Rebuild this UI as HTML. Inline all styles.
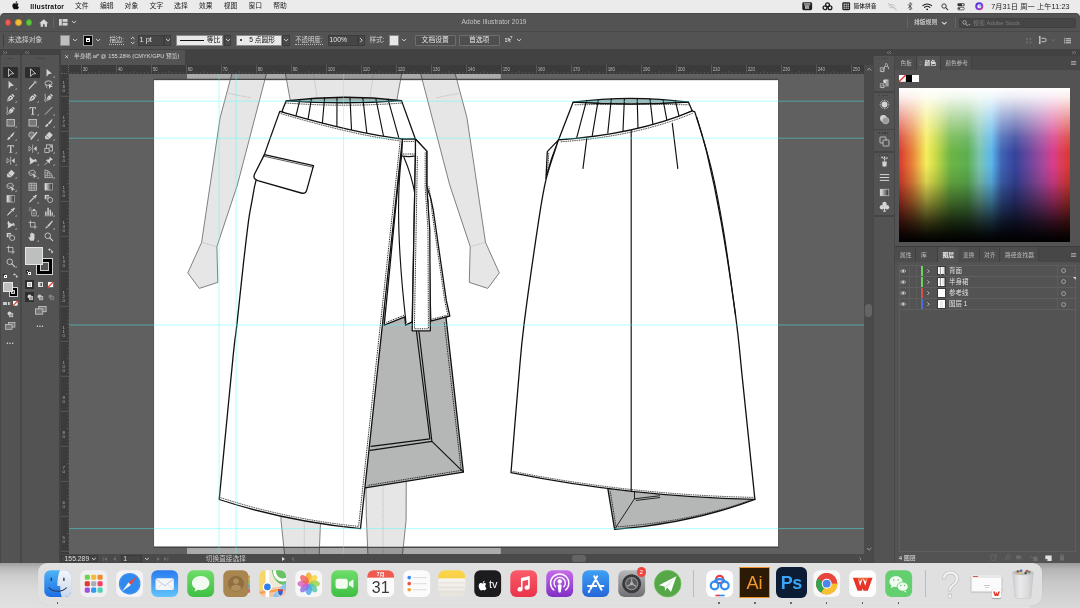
<!DOCTYPE html>
<html lang="zh-CN">
<head>
<meta charset="utf-8">
<title>Adobe Illustrator 2019</title>
<style>
*{box-sizing:border-box;margin:0;padding:0}
html,body{width:1080px;height:608px;overflow:hidden;background:#d9d9da;font-family:"Liberation Sans","Noto Sans CJK SC",sans-serif}
#root{will-change:transform;position:relative;width:1080px;height:608px;overflow:hidden;background:#d9d9da}
.abs{position:absolute}
.t{position:absolute;white-space:nowrap;line-height:1}
svg{position:absolute;overflow:visible}

</style>
</head>
<body>
<div id="root">
<div class="abs" style="left:0px;top:0px;width:1080px;height:12.8px;background:#ebebeb;"></div>
<svg style="left:11.6px;top:1.400px" width="7" height="8.4" viewBox="0 0 14 17"><path fill="#111" d="M11.6 9c0-2 1.6-2.9 1.7-3-0.9-1.400-2.400-1.600-2.900-1.600-1.200-0.100-2.400 0.700-3 0.700-0.600 0-1.600-0.700-2.600-0.700C3.400 4.400 2.100 5.200 1.400 6.400c-1.500 2.600-0.400 6.400 1 8.500 0.700 1 1.500 2.200 2.600 2.100 1-0 1.400-0.700 2.700-0.700 1.200 0 1.600 0.700 2.700 0.700 1.100-0 1.800-1 2.500-2.100 0.800-1.200 1.100-2.300 1.100-2.400-0-0-2.300-0.900-2.400-3.500zM9.700 3c0.600-0.700 0.900-1.600 0.800-2.600-0.800 0-1.800 0.500-2.400 1.200-0.500 0.600-1 1.600-0.800 2.500 0.900 0.100 1.800-0.400 2.400-1.100z"/></svg>
<div class="t" style="left:30.2px;top:3.9px;font-size:6.9px;color:#111;font-weight:bold;letter-spacing:0.2px">Illustrator</div>
<div class="t" style="left:75px;top:3.3px;font-size:6.8px;color:#1c1c1c;">文件</div>
<div class="t" style="left:99.9px;top:3.3px;font-size:6.8px;color:#1c1c1c;">编辑</div>
<div class="t" style="left:124.6px;top:3.3px;font-size:6.8px;color:#1c1c1c;">对象</div>
<div class="t" style="left:149.4px;top:3.3px;font-size:6.8px;color:#1c1c1c;">文字</div>
<div class="t" style="left:174.1px;top:3.3px;font-size:6.8px;color:#1c1c1c;">选择</div>
<div class="t" style="left:198.9px;top:3.3px;font-size:6.8px;color:#1c1c1c;">效果</div>
<div class="t" style="left:223.7px;top:3.3px;font-size:6.8px;color:#1c1c1c;">视图</div>
<div class="t" style="left:248.5px;top:3.3px;font-size:6.8px;color:#1c1c1c;">窗口</div>
<div class="t" style="left:273.3px;top:3.3px;font-size:6.8px;color:#1c1c1c;">帮助</div>
<svg style="left:802px;top:2.2px" width="10.4" height="8.4" viewBox="0 0 21 17"><rect x="0.500" y="0.500" width="20" height="16" rx="3" fill="#222"/><rect x="4" y="3" width="13" height="2" fill="#ebebeb"/><text x="10.500" y="14" font-size="10" font-weight="bold" text-anchor="middle" fill="#ebebeb" font-family="Liberation Sans, sans-serif">W</text></svg>
<svg style="left:821.6px;top:2.2px" width="11" height="8.6" viewBox="0 0 22 17"><g fill="none" stroke="#1a1a1a" stroke-width="2.600"><circle cx="11" cy="5.500" r="3.800"/><circle cx="6" cy="11.500" r="3.800"/><circle cx="16" cy="11.500" r="3.800"/></g></svg>
<svg style="left:842.2px;top:2.2px" width="8.4" height="8.4" viewBox="0 0 16 16"><rect x="0.500" y="0.500" width="15" height="15" rx="2.500" fill="#222"/><g fill="#ebebeb"><rect x="3" y="3" width="2.400" height="2.400"/><rect x="6.800" y="3" width="2.400" height="2.400"/><rect x="10.600" y="3" width="2.400" height="2.400"/><rect x="3" y="6.800" width="2.400" height="2.400"/><rect x="6.800" y="6.800" width="2.400" height="2.400"/><rect x="10.600" y="6.800" width="2.400" height="2.400"/><rect x="3" y="10.600" width="2.400" height="2.400"/><rect x="6.800" y="10.600" width="2.400" height="2.400"/><rect x="10.600" y="10.600" width="2.400" height="2.400"/></g></svg>
<div class="t" style="left:853.6px;top:3.9px;font-size:5.7px;color:#1c1c1c;font-weight:500">简体拼音</div>
<svg style="left:886.5px;top:2.6px" width="11" height="7.6" viewBox="0 0 22 15"><g fill="none" stroke="#b4b4b4" stroke-width="1.600" stroke-linecap="round"><path d="M2 5c5-3 10-3 14 1"/><path d="M5 9c4-2 8-1 11 2"/><path d="M3 1l16 13"/></g></svg>
<svg style="left:906.6px;top:2.2px" width="6" height="8.600" viewBox="0 0 12 17"><path fill="none" stroke="#333" stroke-width="1.500" stroke-linejoin="round" d="M2 4.500l8 8-4 3.500V1l4 3.500-8 8"/></svg>
<svg style="left:922.4px;top:2.6px" width="10.400" height="7.800" viewBox="0 0 21 16"><g fill="none" stroke="#222" stroke-width="2.200" stroke-linecap="round"><path d="M1.500 5.500a13 13 0 0 1 18 0"/><path d="M5 9.200a8 8 0 0 1 11 0"/></g><circle cx="10.500" cy="13" r="1.900" fill="#222"/></svg>
<svg style="left:941.4px;top:2.6px" width="7.600" height="7.600" viewBox="0 0 15 15"><circle cx="6" cy="6" r="4.300" fill="none" stroke="#333" stroke-width="1.800"/><path d="M9.300 9.300l4.200 4.200" stroke="#333" stroke-width="2" stroke-linecap="round"/></svg>
<svg style="left:957.2px;top:2.8px" width="8" height="7.400" viewBox="0 0 16 15"><rect x="0.500" y="0.500" width="15" height="6" rx="3" fill="#333"/><circle cx="11.600" cy="3.500" r="1.800" fill="#ebebeb"/><rect x="1.200" y="8.700" width="13.600" height="5.300" rx="2.650" fill="none" stroke="#333" stroke-width="1.400"/><circle cx="4.300" cy="11.350" r="1.900" fill="#333"/></svg>
<svg style="left:974.6px;top:2.200px" width="8.600" height="8.600" viewBox="0 0 16 16"><defs><linearGradient id="siri" x1="0" y1="0" x2="1" y2="1"><stop offset="0" stop-color="#3b2bd6"/><stop offset="0.500" stop-color="#7b3fe4"/><stop offset="1" stop-color="#e8456e"/></linearGradient></defs><circle cx="8" cy="8" r="7.500" fill="url(#siri)"/><circle cx="8" cy="8" r="3.600" fill="#f4f0ff"/><circle cx="9.500" cy="7" r="2" fill="#58c6f2" opacity="0.800"/></svg>
<div class="t" style="left:991.2px;top:3.3px;font-size:7.2px;color:#1a1a1a;letter-spacing:0.12px">7月31日 周一 上午11:23</div>
<div class="abs" style="left:0px;top:12.8px;width:1080px;height:550px;background:#535353;border-radius:5px 5px 0 0"></div>
<div class="abs" style="left:0px;top:12.8px;width:1080px;height:19.4px;background:#535353;border-radius:5px 5px 0 0;border-bottom:1px solid #494949;border-top:1.200px solid #494949"></div>
<div class="abs" style="left:4.6000000000000005px;top:19.3px;width:6.600px;height:6.600px;border-radius:50%;background:#ee5e57;border:0.500px solid #c9433d"></div>
<div class="abs" style="left:15.099999999999998px;top:19.3px;width:6.600px;height:6.600px;border-radius:50%;background:#f5bd30;border:0.500px solid #cf9a22"></div>
<div class="abs" style="left:25.7px;top:19.3px;width:6.600px;height:6.600px;border-radius:50%;background:#5fc93f;border:0.500px solid #47a32c"></div>
<svg style="left:38.8px;top:18.6px" width="9.600" height="8" viewBox="0 0 19 16"><path fill="#d8d8d8" d="M9.500 0.500L0.500 8.500h2.700v7h4.600v-4.800h3.400v4.800h4.600v-7h2.700z"/></svg>
<div class="abs" style="left:53.2px;top:17px;width:0.7px;height:11px;background:#646464;"></div>
<svg style="left:58.6px;top:19px" width="8.600" height="6.600" viewBox="0 0 17 13"><g fill="#d2d2d2"><rect x="0" y="0" width="5.500" height="13"/><rect x="7" y="0" width="10" height="5.600"/><rect x="7" y="7.400" width="10" height="5.600"/></g></svg>
<svg style="left:72.10000000000001px;top:21.299999999999997px" width="4.2" height="2.2" viewBox="0 0 4.2 2.2"><path d="M0.300 0.300L2.1 1.9000000000000001L3.9000000000000004 0.300" fill="none" stroke="#d0d0d0" stroke-width="1" stroke-linecap="round" stroke-linejoin="round"/></svg>
<div class="t" style="left:461.6px;top:19.2px;font-size:6.6px;color:#c4c4c4;letter-spacing:0.020px">Adobe Illustrator 2019</div>
<div class="abs" style="left:906.8px;top:17px;width:0.7px;height:11px;background:#646464;"></div>
<div class="t" style="left:914px;top:20.2px;font-size:5.8px;color:#dadada;font-weight:500">排版规则</div>
<svg style="left:942.3000000000001px;top:22.400000000000002px" width="4.6" height="2.4" viewBox="0 0 4.6 2.4"><path d="M0.300 0.300L2.3 2.1L4.3 0.300" fill="none" stroke="#dcdcdc" stroke-width="1.1" stroke-linecap="round" stroke-linejoin="round"/></svg>
<div class="abs" style="left:954.6px;top:17px;width:0.7px;height:11px;background:#646464;"></div>
<div class="abs" style="left:958.8px;top:18.2px;width:117.6px;height:9.4px;background:#454545;border-radius:1.500px;border:0.500px solid #404040"></div>
<svg style="left:961.6px;top:20.200px" width="9" height="6.400" viewBox="0 0 18 13"><circle cx="5" cy="5" r="3.600" fill="none" stroke="#bdbdbd" stroke-width="1.500"/><path d="M7.600 7.800l3.600 4" stroke="#bdbdbd" stroke-width="1.700" stroke-linecap="round"/><path d="M12.500 8.500h4.500l-2.250 2.800z" fill="#bdbdbd"/></svg>
<div class="t" style="left:973.2px;top:20.6px;font-size:5.9px;color:#7d7d7d;">搜索 Adobe Stock</div>
<div class="abs" style="left:0px;top:32.2px;width:1080px;height:17px;background:#535353;"></div>
<div class="abs" style="left:3.4px;top:34px;width:0.8px;height:12.6px;background:#3e3e3e;"></div>
<div class="t" style="left:8px;top:36.65px;font-size:6.9px;color:#d2d2d2;">未选择对象</div>
<div class="abs" style="left:59.5px;top:35px;width:10.6px;height:10.6px;background:#bdbfbe;border:0.500px solid #8a8a8a"></div>
<svg style="left:72.7px;top:39.3px" width="4.2" height="2.2" viewBox="0 0 4.2 2.2"><path d="M0.300 0.300L2.1 1.9000000000000001L3.9000000000000004 0.300" fill="none" stroke="#c8c8c8" stroke-width="1" stroke-linecap="round" stroke-linejoin="round"/></svg>
<div class="abs" style="left:82.6px;top:35px;width:10.6px;height:10.6px;background:#000;border:0.600px solid #9a9a9a"></div>
<div class="abs" style="left:86px;top:38.4px;width:3.8px;height:3.8px;background:#fff;"></div>
<div class="abs" style="left:87.1px;top:39.5px;width:1.6px;height:1.6px;background:#000;"></div>
<svg style="left:96.10000000000001px;top:39.3px" width="4.2" height="2.2" viewBox="0 0 4.2 2.2"><path d="M0.300 0.300L2.1 1.9000000000000001L3.9000000000000004 0.300" fill="none" stroke="#c8c8c8" stroke-width="1" stroke-linecap="round" stroke-linejoin="round"/></svg>
<div class="t" style="left:109.4px;top:36.9px;font-size:6.4px;color:#d2d2d2;border-bottom:0.600px dotted #bbb;padding-bottom:0.300px">描边:</div>
<svg style="left:130.8px;top:41.8px" width="3.600" height="2" viewBox="0 0 3.600 2"><path d="M0.300 0.300L1.800 1.700L3.300 0.300" fill="none" stroke="#d0d0d0" stroke-width="1" stroke-linecap="round"/></svg>
<svg style="left:130.8px;top:37.2px" width="3.600" height="2" viewBox="0 0 3.600 2"><path d="M0.300 1.700L1.800 0.300L3.300 1.700" fill="none" stroke="#d0d0d0" stroke-width="1" stroke-linecap="round"/></svg>
<div class="abs" style="left:137.8px;top:35px;width:26px;height:10.6px;background:#464646;border:0.500px solid #3c3c3c"></div>
<div class="t" style="left:139.6px;top:36.4px;font-size:7.4px;color:#e4e4e4;">1 pt</div>
<div class="abs" style="left:163.8px;top:35px;width:7.6px;height:10.6px;background:#4a4a4a;border:0.500px solid #3c3c3c"></div>
<svg style="left:165.5px;top:39.3px" width="4.2" height="2.2" viewBox="0 0 4.2 2.2"><path d="M0.300 0.300L2.1 1.9000000000000001L3.9000000000000004 0.300" fill="none" stroke="#c8c8c8" stroke-width="1" stroke-linecap="round" stroke-linejoin="round"/></svg>
<div class="abs" style="left:176px;top:35px;width:47.4px;height:10.6px;background:#e9e9e9;border:0.500px solid #8a8a8a"></div>
<div class="abs" style="left:180px;top:39.9px;width:24px;height:1px;background:#111;"></div>
<div class="t" style="left:206.8px;top:36.7px;font-size:6.8px;color:#111;">等比</div>
<div class="abs" style="left:223.8px;top:35px;width:7.6px;height:10.6px;background:#4a4a4a;border:0.500px solid #3c3c3c"></div>
<svg style="left:225.70000000000002px;top:39.3px" width="4.2" height="2.2" viewBox="0 0 4.2 2.2"><path d="M0.300 0.300L2.1 1.9000000000000001L3.9000000000000004 0.300" fill="none" stroke="#c8c8c8" stroke-width="1" stroke-linecap="round" stroke-linejoin="round"/></svg>
<div class="abs" style="left:236px;top:35px;width:46px;height:10.6px;background:#e9e9e9;border:0.500px solid #8a8a8a"></div>
<div class="abs" style="left:240px;top:39.200px;width:2.200px;height:2.200px;border-radius:50%;background:#111"></div>
<div class="t" style="left:249.2px;top:36.75px;font-size:6.7px;color:#111;">5 点圆形</div>
<div class="abs" style="left:282.4px;top:35px;width:7.6px;height:10.6px;background:#4a4a4a;border:0.500px solid #3c3c3c"></div>
<svg style="left:284.29999999999995px;top:39.3px" width="4.2" height="2.2" viewBox="0 0 4.2 2.2"><path d="M0.300 0.300L2.1 1.9000000000000001L3.9000000000000004 0.300" fill="none" stroke="#c8c8c8" stroke-width="1" stroke-linecap="round" stroke-linejoin="round"/></svg>
<div class="t" style="left:295.2px;top:36.9px;font-size:6.4px;color:#d2d2d2;border-bottom:0.600px dotted #bbb;padding-bottom:0.300px">不透明度:</div>
<div class="abs" style="left:328.2px;top:35px;width:29.4px;height:10.6px;background:#464646;border:0.500px solid #3c3c3c"></div>
<div class="t" style="left:329.6px;top:36.7px;font-size:6.8px;color:#e4e4e4;">100%</div>
<div class="abs" style="left:357.8px;top:35px;width:7.2px;height:10.6px;background:#4a4a4a;border:0.500px solid #3c3c3c"></div>
<svg style="left:360.2px;top:38.2px" width="2.600" height="4.400" viewBox="0 0 2.600 4.400"><path d="M0.400 0.400L2.200 2.200L0.400 4" fill="none" stroke="#d0d0d0" stroke-width="1" stroke-linecap="round"/></svg>
<div class="t" style="left:369.4px;top:36.75px;font-size:6.7px;color:#d2d2d2;">样式:</div>
<div class="abs" style="left:388.6px;top:35px;width:10.6px;height:10.6px;background:#e6e6e6;border:0.500px solid #8a8a8a"></div>
<svg style="left:401.9px;top:39.3px" width="4.2" height="2.2" viewBox="0 0 4.2 2.2"><path d="M0.300 0.300L2.1 1.9000000000000001L3.9000000000000004 0.300" fill="none" stroke="#c8c8c8" stroke-width="1" stroke-linecap="round" stroke-linejoin="round"/></svg>
<div class="abs" style="left:414.8px;top:35px;width:41px;height:10.6px;background:#4e4e4e;border:0.700px solid #6e6e6e;border-radius:1px"></div>
<div class="t" style="left:421.6px;top:36.7px;font-size:6.8px;color:#e6e6e6;">文档设置</div>
<div class="abs" style="left:459.2px;top:35px;width:40.4px;height:10.6px;background:#4e4e4e;border:0.700px solid #6e6e6e;border-radius:1px"></div>
<div class="t" style="left:469px;top:36.7px;font-size:6.8px;color:#e6e6e6;">首选项</div>
<svg style="left:505.4px;top:36.4px" width="8" height="7.600" viewBox="0 0 16 15"><g fill="#d0d0d0"><rect x="0" y="4" width="5" height="1.600"/><rect x="0" y="7" width="5" height="1.600"/><rect x="0" y="10" width="5" height="1.600"/><path d="M6.500 3l6 5-3 0.600 1.800 3.600-1.400 0.600-1.700-3.600-1.700 1.800z"/><rect x="10" y="0" width="5" height="1.300"/><rect x="12" y="0" width="1.300" height="5"/></g></svg>
<svg style="left:517.3px;top:39.3px" width="4.2" height="2.2" viewBox="0 0 4.2 2.2"><path d="M0.300 0.300L2.1 1.9000000000000001L3.9000000000000004 0.300" fill="none" stroke="#c8c8c8" stroke-width="1" stroke-linecap="round" stroke-linejoin="round"/></svg>
<svg style="left:1026.4px;top:37.6px" width="5.600" height="5.600" viewBox="0 0 11 11"><g fill="#6c6c6c"><rect x="0" y="0" width="3.600" height="3.600"/><rect x="7" y="0" width="3.600" height="3.600"/><rect x="0" y="7" width="3.600" height="3.600"/><rect x="7" y="7" width="3.600" height="3.600"/></g></svg>
<svg style="left:1038.6px;top:36.2px" width="8.400" height="8" viewBox="0 0 17 16"><g fill="#d8d8d8"><rect x="0" y="0" width="3" height="16"/></g><g fill="#535353"><rect x="0" y="3.500" width="3" height="1"/><rect x="0" y="7.500" width="3" height="1"/><rect x="0" y="11.500" width="3" height="1"/></g><path d="M5 4.500h6a3.500 3.500 0 0 1 0 7h-6" fill="none" stroke="#d8d8d8" stroke-width="1.800"/></svg>
<svg style="left:1050.5px;top:39.3px" width="4.2" height="2.2" viewBox="0 0 4.2 2.2"><path d="M0.300 0.300L2.1 1.9000000000000001L3.9000000000000004 0.300" fill="none" stroke="#6a6a6a" stroke-width="1" stroke-linecap="round" stroke-linejoin="round"/></svg>
<svg style="left:1064px;top:37.600px" width="7" height="5.600" viewBox="0 0 14 11"><g fill="#d2d2d2"><rect x="0" y="0.500" width="2.400" height="2"/><rect x="3.600" y="0.500" width="10.400" height="2"/><rect x="0" y="4.500" width="2.400" height="2"/><rect x="3.600" y="4.500" width="10.400" height="2"/><rect x="0" y="8.500" width="2.400" height="2"/><rect x="3.600" y="8.500" width="10.400" height="2"/></g></svg>
<div class="abs" style="left:0px;top:49px;width:1080px;height:15.8px;background:#424242;"></div>
<div class="abs" style="left:60.8px;top:50px;width:124.6px;height:14.6px;background:#535353;border-radius:1px 1px 0 0"></div>
<svg style="left:64.6px;top:55.4px" width="3.400" height="3.400" viewBox="0 0 3.400 3.400"><path d="M0.300 0.300L3.100 3.100M3.100 0.300L0.300 3.100" stroke="#d8d8d8" stroke-width="0.800"/></svg>
<div class="t" style="left:74px;top:54.1px;font-size:5.7px;color:#dcdcdc;">半身裙.ai* @ 155.28% (CMYK/GPU 预览)</div>
<div class="abs" style="left:0px;top:49px;width:61px;height:513.8px;background:#484848;"></div>
<div class="abs" style="left:0px;top:49px;width:61px;height:6.6px;background:#424242;"></div>
<div class="abs" style="left:59.2px;top:49px;width:1.8px;height:513.8px;background:#424242;"></div>
<div class="abs" style="left:0.8px;top:55.4px;width:19.4px;height:507.4px;background:#535353;"></div>
<div class="abs" style="left:21.8px;top:55.4px;width:37.4px;height:507.4px;background:#535353;"></div>
<svg style="left:2.8px;top:51px" width="4.200" height="3.200" viewBox="0 0 4.200 3.200"><path d="M0.300 0.300L1.700 1.600L0.300 2.900M2.500 0.300L3.900 1.600L2.500 2.900" fill="none" stroke="#9a9a9a" stroke-width="0.700"/></svg>
<svg style="left:25.2px;top:51px" width="4.200" height="3.200" viewBox="0 0 4.200 3.200"><path d="M1.700 0.300L0.300 1.600L1.700 2.900M3.900 0.300L2.500 1.600L3.900 2.900" fill="none" stroke="#9a9a9a" stroke-width="0.700"/></svg>
<div class="abs" style="left:5.4px;top:57.8px;width:9.600px;height:1.400px;background:repeating-linear-gradient(90deg,#3e3e3e 0,#3e3e3e 0.800px,transparent 0.800px,transparent 1.600px)"></div>
<div class="abs" style="left:35.6px;top:57.8px;width:9.600px;height:1.400px;background:repeating-linear-gradient(90deg,#3e3e3e 0,#3e3e3e 0.800px,transparent 0.800px,transparent 1.600px)"></div>
<div class="abs" style="left:3.3px;top:67px;width:14.6px;height:10.8px;background:#2d2d2d;border-radius:1px"></div>
<svg style="left:5.90px;top:67.70px" width="9.4" height="9.4" viewBox="0 0 10 10"><path d="M2.700 0.900L8.300 6.100L5.100 6.300L2.700 9.100Z" fill="none" stroke="#d2d2d2" stroke-width="0.900" stroke-linejoin="round"/></svg>
<svg style="left:5.90px;top:80.36px" width="9.4" height="9.4" viewBox="0 0 10 10"><path d="M2.700 0.700L8.500 6.100L5.200 6.300L2.700 9.300Z" fill="#d2d2d2"/></svg>
<svg style="left:14.70px;top:88.36px" width="1.600" height="1.600" viewBox="0 0 2 2"><path d="M2 0V2H0Z" fill="#d2d2d2"/></svg>
<svg style="left:5.90px;top:93.02px" width="9.4" height="9.4" viewBox="0 0 10 10"><path d="M6.900 0.800L9.300 3.200L8.200 4.300L5.800 1.900Z" fill="#d2d2d2"/><path d="M5.400 2.400L7.700 4.700C7.500 6.600 5.700 7.900 1.200 9L1 8.800C2.100 4.300 3.400 2.600 5.400 2.400Z" fill="#d2d2d2"/><path d="M1.300 8.700L4.600 5.400" stroke="#535353" stroke-width="0.700"/><circle cx="4.900" cy="5.100" r="0.800" fill="#535353"/></svg>
<svg style="left:14.70px;top:101.02px" width="1.600" height="1.600" viewBox="0 0 2 2"><path d="M2 0V2H0Z" fill="#d2d2d2"/></svg>
<svg style="left:5.90px;top:105.68px" width="9.4" height="9.4" viewBox="0 0 10 10"><path d="M7.400 0.800L9.600 3L8.600 4L6.400 1.800Z" fill="#d2d2d2"/><path d="M6 2.300L8.100 4.400C7.900 6.200 6.300 7.400 2.600 8.400L2.400 8.200C3.300 4.400 4.300 2.500 6 2.300Z" fill="#d2d2d2"/><path d="M2.700 8.100L5.300 5.500" stroke="#535353" stroke-width="0.600"/><path d="M1.400 0.800C0.400 3.500 2.400 4.500 1.200 6.600C0.300 8 0.900 9.200 2.200 9.300" fill="none" stroke="#d2d2d2" stroke-width="0.800"/></svg>
<svg style="left:5.90px;top:118.34px" width="9.4" height="9.4" viewBox="0 0 10 10"><rect x="1" y="1.600" width="8" height="7" fill="#777" stroke="#d2d2d2" stroke-width="0.800"/></svg>
<svg style="left:14.70px;top:126.34px" width="1.600" height="1.600" viewBox="0 0 2 2"><path d="M2 0V2H0Z" fill="#d2d2d2"/></svg>
<svg style="left:5.90px;top:131.00px" width="9.4" height="9.4" viewBox="0 0 10 10"><path d="M9.300 0.700C7.200 2 5.300 4 4.200 5.600L5.300 6.700C6.900 5.600 8.400 3.400 9.300 0.700Z" fill="#d2d2d2"/><path d="M3.700 6L4.900 7.200C4.600 8.800 2.700 9.600 0.900 9.300C1.900 8.600 1.700 6.500 3.700 6Z" fill="#d2d2d2"/></svg>
<svg style="left:14.70px;top:139.00px" width="1.600" height="1.600" viewBox="0 0 2 2"><path d="M2 0V2H0Z" fill="#d2d2d2"/></svg>
<svg style="left:5.90px;top:143.66px" width="9.4" height="9.4" viewBox="0 0 10 10"><path d="M1.600 1.200h6.800v2.200h-0.700c-0.100-0.800-0.400-1.200-1.200-1.200h-0.800v5.700c0 0.600 0.300 0.700 1 0.800v0.700h-3.400v-0.700c0.700-0.100 1-0.200 1-0.800v-5.700h-0.800c-0.800 0-1.100 0.400-1.200 1.200h-0.700z" fill="#d2d2d2"/></svg>
<svg style="left:14.70px;top:151.66px" width="1.600" height="1.600" viewBox="0 0 2 2"><path d="M2 0V2H0Z" fill="#d2d2d2"/></svg>
<svg style="left:5.90px;top:156.32px" width="9.4" height="9.4" viewBox="0 0 10 10"><path d="M5 0.600v8.800" stroke="#d2d2d2" stroke-width="0.700"/><path d="M1 2.400L3.800 5L1 7.600Z" fill="none" stroke="#d2d2d2" stroke-width="0.700"/><path d="M9.200 2.200L6.100 5L9.200 7.800Z" fill="#d2d2d2"/></svg>
<svg style="left:14.70px;top:164.32px" width="1.600" height="1.600" viewBox="0 0 2 2"><path d="M2 0V2H0Z" fill="#d2d2d2"/></svg>
<svg style="left:5.90px;top:168.98px" width="9.4" height="9.4" viewBox="0 0 10 10"><path d="M5.700 0.800L9.400 4.200L5.500 8.800L1.600 8.800L0.900 5.900Z" fill="#d2d2d2"/><path d="M2 4.700L5.900 8.200" stroke="#535353" stroke-width="0.700"/></svg>
<svg style="left:14.70px;top:176.98px" width="1.600" height="1.600" viewBox="0 0 2 2"><path d="M2 0V2H0Z" fill="#d2d2d2"/></svg>
<svg style="left:5.90px;top:181.64px" width="9.4" height="9.4" viewBox="0 0 10 10"><path d="M1 4.200C0.800 2.200 2.600 1.400 4 1.800C5.200 0.800 7.200 1.400 7.400 3C8.400 3.800 7.800 5.400 6.800 5.600L3.200 6.800C1.800 6.800 0.800 5.800 1 4.200Z" fill="none" stroke="#d2d2d2" stroke-width="0.800"/><path d="M1.400 3.600L4.800 5.400L7.200 3.200M4.800 5.400V6.200" fill="none" stroke="#d2d2d2" stroke-width="0.500"/><path d="M5.400 5L9.600 8L7.400 8.200L6.200 10Z" fill="#d2d2d2"/></svg>
<svg style="left:14.70px;top:189.64px" width="1.600" height="1.600" viewBox="0 0 2 2"><path d="M2 0V2H0Z" fill="#d2d2d2"/></svg>
<svg style="left:5.90px;top:194.30px" width="9.4" height="9.4" viewBox="0 0 10 10"><defs><linearGradient id="gr11" x1="0" x2="1"><stop offset="0" stop-color="#e8e8e8"/><stop offset="1" stop-color="#2a2a2a"/></linearGradient></defs><rect x="1" y="1.400" width="8" height="7.200" fill="url(#gr11)" stroke="#d2d2d2" stroke-width="0.600"/></svg>
<svg style="left:5.90px;top:206.96px" width="9.4" height="9.4" viewBox="0 0 10 10"><path d="M8.200 0.800C9 0.600 9.600 1.200 9.300 2L7.800 3.600L8.400 4.200L7.600 5L5.200 2.600L6 1.800L6.600 2.400Z" fill="#d2d2d2"/><path d="M5.600 3.600L6.600 4.600L2.600 8.600L1 9.200L1.600 7.600Z" fill="#d2d2d2"/></svg>
<svg style="left:14.70px;top:214.96px" width="1.600" height="1.600" viewBox="0 0 2 2"><path d="M2 0V2H0Z" fill="#d2d2d2"/></svg>
<svg style="left:5.90px;top:219.62px" width="9.4" height="9.4" viewBox="0 0 10 10"><path d="M1 8.800C2.600 7.800 2.400 6 1.800 4.200C1.400 2.800 2 1.400 2.800 0.800C2.800 2.200 4 3 5.200 3.600C6.600 4.300 7.400 3.600 8.200 2.800C9 3.800 9.400 5.400 9.200 6.600C8.400 5.600 7.200 5.600 6.400 6.200C5.200 7.200 3.600 8.800 1 8.800Z" fill="#d2d2d2"/></svg>
<svg style="left:14.70px;top:227.62px" width="1.600" height="1.600" viewBox="0 0 2 2"><path d="M2 0V2H0Z" fill="#d2d2d2"/></svg>
<svg style="left:5.90px;top:232.28px" width="9.4" height="9.4" viewBox="0 0 10 10"><rect x="0.800" y="1" width="4.600" height="4.600" fill="#d2d2d2"/><rect x="2.800" y="2.800" width="3.800" height="3.800" fill="#8a8a8a" stroke="#535353" stroke-width="0.400"/><circle cx="6.600" cy="6.400" r="2.700" fill="#535353" stroke="#d2d2d2" stroke-width="0.800"/></svg>
<svg style="left:5.90px;top:244.94px" width="9.4" height="9.4" viewBox="0 0 10 10"><path d="M2.600 0.600V7.400H9.400M0.600 2.600H7.400V9.400" fill="none" stroke="#d2d2d2" stroke-width="0.800"/></svg>
<svg style="left:5.90px;top:257.60px" width="9.4" height="9.4" viewBox="0 0 10 10"><circle cx="4" cy="4" r="3" fill="none" stroke="#d2d2d2" stroke-width="0.900"/><path d="M6.200 6.200L9.200 9.200" stroke="#d2d2d2" stroke-width="1.200" stroke-linecap="round"/></svg>
<svg style="left:14.70px;top:265.60px" width="1.600" height="1.600" viewBox="0 0 2 2"><path d="M2 0V2H0Z" fill="#d2d2d2"/></svg>
<div class="abs" style="left:25.3px;top:67px;width:14.6px;height:10.8px;background:#2d2d2d;border-radius:1px"></div>
<svg style="left:27.90px;top:67.70px" width="9.4" height="9.4" viewBox="0 0 10 10"><path d="M2.700 0.900L8.300 6.100L5.100 6.300L2.700 9.100Z" fill="none" stroke="#d2d2d2" stroke-width="0.900" stroke-linejoin="round"/></svg>
<svg style="left:44.10px;top:67.70px" width="9.4" height="9.4" viewBox="0 0 10 10"><path d="M2.700 0.700L8.500 6.100L5.200 6.300L2.700 9.300Z" fill="#d2d2d2"/></svg>
<svg style="left:52.90px;top:75.70px" width="1.600" height="1.600" viewBox="0 0 2 2"><path d="M2 0V2H0Z" fill="#d2d2d2"/></svg>
<svg style="left:27.90px;top:80.36px" width="9.4" height="9.4" viewBox="0 0 10 10"><path d="M1.300 9.200L6.300 3.800" stroke="#d2d2d2" stroke-width="1.300" stroke-linecap="round"/><path d="M7.600 0.600v3.600M5.800 2.400h3.600M6.400 1.200l2.400 2.400M8.800 1.200l-2.400 2.400" stroke="#d2d2d2" stroke-width="0.500"/></svg>
<svg style="left:44.10px;top:80.36px" width="9.4" height="9.4" viewBox="0 0 10 10"><ellipse cx="4.800" cy="3.400" rx="3.800" ry="2.500" fill="none" stroke="#d2d2d2" stroke-width="0.900"/><path d="M2.600 5.200c-0.800 1.200 0 2.400 1 3.600" fill="none" stroke="#d2d2d2" stroke-width="0.800"/><path d="M5 3.800L9.400 7.400L7 7.400L5.600 9.600Z" fill="#d2d2d2"/></svg>
<svg style="left:27.90px;top:93.02px" width="9.4" height="9.4" viewBox="0 0 10 10"><path d="M6.900 0.800L9.300 3.200L8.200 4.300L5.800 1.900Z" fill="#d2d2d2"/><path d="M5.400 2.400L7.700 4.700C7.500 6.600 5.700 7.900 1.200 9L1 8.800C2.100 4.300 3.400 2.600 5.400 2.400Z" fill="#d2d2d2"/><path d="M1.300 8.700L4.600 5.400" stroke="#535353" stroke-width="0.700"/><circle cx="4.900" cy="5.100" r="0.800" fill="#535353"/></svg>
<svg style="left:36.70px;top:101.02px" width="1.600" height="1.600" viewBox="0 0 2 2"><path d="M2 0V2H0Z" fill="#d2d2d2"/></svg>
<svg style="left:44.10px;top:93.02px" width="9.4" height="9.4" viewBox="0 0 10 10"><path d="M7.400 0.800L9.600 3L8.600 4L6.400 1.800Z" fill="#d2d2d2"/><path d="M6 2.300L8.100 4.400C7.900 6.200 6.300 7.400 2.600 8.400L2.400 8.200C3.300 4.400 4.300 2.500 6 2.300Z" fill="#d2d2d2"/><path d="M2.700 8.100L5.300 5.500" stroke="#535353" stroke-width="0.600"/><path d="M1.400 0.800C0.400 3.500 2.400 4.500 1.200 6.600C0.300 8 0.900 9.200 2.200 9.300" fill="none" stroke="#d2d2d2" stroke-width="0.800"/></svg>
<svg style="left:27.90px;top:105.68px" width="9.4" height="9.4" viewBox="0 0 10 10"><path d="M1.600 1.200h6.800v2.200h-0.700c-0.100-0.800-0.400-1.200-1.200-1.200h-0.800v5.700c0 0.600 0.300 0.700 1 0.800v0.700h-3.400v-0.700c0.700-0.100 1-0.200 1-0.800v-5.700h-0.800c-0.800 0-1.100 0.400-1.200 1.200h-0.700z" fill="#d2d2d2"/></svg>
<svg style="left:36.70px;top:113.68px" width="1.600" height="1.600" viewBox="0 0 2 2"><path d="M2 0V2H0Z" fill="#d2d2d2"/></svg>
<svg style="left:44.10px;top:105.68px" width="9.4" height="9.4" viewBox="0 0 10 10"><path d="M1.400 8.800L8.600 1.400" stroke="#d2d2d2" stroke-width="0.900" stroke-linecap="round"/></svg>
<svg style="left:52.90px;top:113.68px" width="1.600" height="1.600" viewBox="0 0 2 2"><path d="M2 0V2H0Z" fill="#d2d2d2"/></svg>
<svg style="left:27.90px;top:118.34px" width="9.4" height="9.4" viewBox="0 0 10 10"><rect x="1" y="1.600" width="8" height="7" fill="#777" stroke="#d2d2d2" stroke-width="0.800"/></svg>
<svg style="left:36.70px;top:126.34px" width="1.600" height="1.600" viewBox="0 0 2 2"><path d="M2 0V2H0Z" fill="#d2d2d2"/></svg>
<svg style="left:44.10px;top:118.34px" width="9.4" height="9.4" viewBox="0 0 10 10"><path d="M9.300 0.700C7.200 2 5.300 4 4.200 5.600L5.300 6.700C6.900 5.600 8.400 3.400 9.300 0.700Z" fill="#d2d2d2"/><path d="M3.700 6L4.900 7.200C4.600 8.800 2.700 9.600 0.900 9.300C1.900 8.600 1.700 6.500 3.700 6Z" fill="#d2d2d2"/></svg>
<svg style="left:52.90px;top:126.34px" width="1.600" height="1.600" viewBox="0 0 2 2"><path d="M2 0V2H0Z" fill="#d2d2d2"/></svg>
<svg style="left:27.90px;top:131.00px" width="9.4" height="9.4" viewBox="0 0 10 10"><circle cx="3.800" cy="4" r="3" fill="#777" stroke="#d2d2d2" stroke-width="0.700"/><path d="M3.400 8.700L9.200 1.600" stroke="#d2d2d2" stroke-width="1.500" stroke-linecap="round"/></svg>
<svg style="left:36.70px;top:139.00px" width="1.600" height="1.600" viewBox="0 0 2 2"><path d="M2 0V2H0Z" fill="#d2d2d2"/></svg>
<svg style="left:44.10px;top:131.00px" width="9.4" height="9.4" viewBox="0 0 10 10"><path d="M5.700 0.800L9.400 4.200L5.500 8.800L1.600 8.800L0.900 5.900Z" fill="#d2d2d2"/><path d="M2 4.700L5.900 8.200" stroke="#535353" stroke-width="0.700"/></svg>
<svg style="left:52.90px;top:139.00px" width="1.600" height="1.600" viewBox="0 0 2 2"><path d="M2 0V2H0Z" fill="#d2d2d2"/></svg>
<svg style="left:27.90px;top:143.66px" width="9.4" height="9.4" viewBox="0 0 10 10"><path d="M5 0.600v8.800" stroke="#d2d2d2" stroke-width="0.700"/><path d="M1 2.400L3.800 5L1 7.600Z" fill="none" stroke="#d2d2d2" stroke-width="0.700"/><path d="M9.200 2.200L6.100 5L9.200 7.800Z" fill="#d2d2d2"/></svg>
<svg style="left:36.70px;top:151.66px" width="1.600" height="1.600" viewBox="0 0 2 2"><path d="M2 0V2H0Z" fill="#d2d2d2"/></svg>
<svg style="left:44.10px;top:143.66px" width="9.4" height="9.4" viewBox="0 0 10 10"><rect x="2.600" y="0.900" width="6.500" height="6.500" fill="none" stroke="#d2d2d2" stroke-width="0.800"/><rect x="0.900" y="4.600" width="4.500" height="4.500" fill="#535353" stroke="#d2d2d2" stroke-width="0.800"/><path d="M5.200 4.800L8 2M8.200 4V1.800H6" fill="none" stroke="#d2d2d2" stroke-width="0.800"/></svg>
<svg style="left:52.90px;top:151.66px" width="1.600" height="1.600" viewBox="0 0 2 2"><path d="M2 0V2H0Z" fill="#d2d2d2"/></svg>
<svg style="left:27.90px;top:156.32px" width="9.4" height="9.4" viewBox="0 0 10 10"><path d="M1 8.800C2.600 7.800 2.400 6 1.800 4.200C1.400 2.800 2 1.400 2.800 0.800C2.800 2.200 4 3 5.200 3.600C6.600 4.300 7.400 3.600 8.200 2.800C9 3.800 9.400 5.400 9.200 6.600C8.400 5.600 7.200 5.600 6.400 6.200C5.200 7.200 3.600 8.800 1 8.800Z" fill="#d2d2d2"/></svg>
<svg style="left:36.70px;top:164.32px" width="1.600" height="1.600" viewBox="0 0 2 2"><path d="M2 0V2H0Z" fill="#d2d2d2"/></svg>
<svg style="left:44.10px;top:156.32px" width="9.4" height="9.4" viewBox="0 0 10 10"><path d="M6.200 0.700L9.400 3.900L8.300 4.400L7.900 4L6.300 5.600C6.600 6.600 6.400 7.400 5.800 8L2.200 4.400C2.800 3.800 3.600 3.600 4.600 3.900L6.200 2.300L5.800 1.900Z" fill="#d2d2d2"/><path d="M3.600 6.600L0.800 9.400" stroke="#d2d2d2" stroke-width="0.800" stroke-linecap="round"/></svg>
<svg style="left:52.90px;top:164.32px" width="1.600" height="1.600" viewBox="0 0 2 2"><path d="M2 0V2H0Z" fill="#d2d2d2"/></svg>
<svg style="left:27.90px;top:168.98px" width="9.4" height="9.4" viewBox="0 0 10 10"><path d="M1 4.200C0.800 2.200 2.600 1.400 4 1.800C5.200 0.800 7.200 1.400 7.400 3C8.400 3.800 7.800 5.400 6.800 5.600L3.200 6.800C1.800 6.800 0.800 5.800 1 4.200Z" fill="none" stroke="#d2d2d2" stroke-width="0.800"/><path d="M1.400 3.600L4.800 5.400L7.200 3.200M4.800 5.400V6.200" fill="none" stroke="#d2d2d2" stroke-width="0.500"/><path d="M5.400 5L9.600 8L7.400 8.200L6.200 10Z" fill="#d2d2d2"/></svg>
<svg style="left:36.70px;top:176.98px" width="1.600" height="1.600" viewBox="0 0 2 2"><path d="M2 0V2H0Z" fill="#d2d2d2"/></svg>
<svg style="left:44.10px;top:168.98px" width="9.4" height="9.4" viewBox="0 0 10 10"><path d="M1 0.800V9.200H9.400C8.600 5.200 5.600 1.800 1 0.800Z" fill="none" stroke="#d2d2d2" stroke-width="0.700"/><path d="M1 3.600L6.600 5.400M1 6.400L8.600 7.400M3.600 1.800V9.200M6.200 3.400V9.200M1 9.200L5.400 2.400" fill="none" stroke="#d2d2d2" stroke-width="0.450"/></svg>
<svg style="left:52.90px;top:176.98px" width="1.600" height="1.600" viewBox="0 0 2 2"><path d="M2 0V2H0Z" fill="#d2d2d2"/></svg>
<svg style="left:27.90px;top:181.64px" width="9.4" height="9.4" viewBox="0 0 10 10"><rect x="1" y="1.200" width="8" height="7.600" fill="#6a6a6a" stroke="#d2d2d2" stroke-width="0.700"/><path d="M1 3.800C3.600 2.800 6 4.800 9 3.600M1 6.400C3.600 5.600 6 7.400 9 6.200M3.600 1.200C4.400 3.600 2.800 6 3.800 8.800M6.400 1.200C7.200 3.600 5.600 6 6.600 8.800" fill="none" stroke="#d2d2d2" stroke-width="0.500"/></svg>
<svg style="left:44.10px;top:181.64px" width="9.4" height="9.4" viewBox="0 0 10 10"><defs><linearGradient id="gr36" x1="0" x2="1"><stop offset="0" stop-color="#e8e8e8"/><stop offset="1" stop-color="#2a2a2a"/></linearGradient></defs><rect x="1" y="1.400" width="8" height="7.200" fill="url(#gr36)" stroke="#d2d2d2" stroke-width="0.600"/></svg>
<svg style="left:27.90px;top:194.30px" width="9.4" height="9.4" viewBox="0 0 10 10"><path d="M8.200 0.800C9 0.600 9.600 1.200 9.300 2L7.800 3.600L8.400 4.200L7.600 5L5.200 2.600L6 1.800L6.600 2.400Z" fill="#d2d2d2"/><path d="M5.600 3.600L6.600 4.600L2.600 8.600L1 9.200L1.600 7.600Z" fill="#d2d2d2"/></svg>
<svg style="left:36.70px;top:202.30px" width="1.600" height="1.600" viewBox="0 0 2 2"><path d="M2 0V2H0Z" fill="#d2d2d2"/></svg>
<svg style="left:44.10px;top:194.30px" width="9.4" height="9.4" viewBox="0 0 10 10"><rect x="0.800" y="1" width="4.600" height="4.600" fill="#d2d2d2"/><rect x="2.800" y="2.800" width="3.800" height="3.800" fill="#8a8a8a" stroke="#535353" stroke-width="0.400"/><circle cx="6.600" cy="6.400" r="2.700" fill="#535353" stroke="#d2d2d2" stroke-width="0.800"/></svg>
<svg style="left:27.90px;top:206.96px" width="9.4" height="9.4" viewBox="0 0 10 10"><rect x="4" y="4" width="4.800" height="5.400" rx="0.600" fill="none" stroke="#d2d2d2" stroke-width="0.800"/><rect x="5.200" y="2.200" width="2.400" height="1.800" fill="#d2d2d2"/><path d="M5.400 6.800h2M6.400 5.800v2" stroke="#d2d2d2" stroke-width="0.500"/><path d="M0.800 1.200h1M2.400 0.800h1M1.400 2.600h1M3 2.200h1M0.800 4h1M2.600 3.800h1" stroke="#d2d2d2" stroke-width="0.600"/></svg>
<svg style="left:36.70px;top:214.96px" width="1.600" height="1.600" viewBox="0 0 2 2"><path d="M2 0V2H0Z" fill="#d2d2d2"/></svg>
<svg style="left:44.10px;top:206.96px" width="9.4" height="9.4" viewBox="0 0 10 10"><rect x="1.200" y="4.800" width="1.500" height="4.200" fill="#d2d2d2"/><rect x="3.600" y="0.800" width="1.500" height="8.200" fill="#d2d2d2"/><rect x="6" y="3" width="1.500" height="6" fill="#d2d2d2"/><path d="M0.400 9.400h9" stroke="#d2d2d2" stroke-width="0.500"/><rect x="8.200" y="5.600" width="1.200" height="3.400" fill="#d2d2d2"/></svg>
<svg style="left:52.90px;top:214.96px" width="1.600" height="1.600" viewBox="0 0 2 2"><path d="M2 0V2H0Z" fill="#d2d2d2"/></svg>
<svg style="left:27.90px;top:219.62px" width="9.4" height="9.4" viewBox="0 0 10 10"><path d="M2.600 0.600V7.400H9.400M0.600 2.600H7.400V9.400" fill="none" stroke="#d2d2d2" stroke-width="0.800"/></svg>
<svg style="left:44.10px;top:219.62px" width="9.4" height="9.4" viewBox="0 0 10 10"><path d="M8.800 0.600L9.600 1.400L5 7.200L3.400 6Z" fill="#d2d2d2"/><path d="M3 6.400L4.600 7.600L1 9.400Z" fill="#d2d2d2"/></svg>
<svg style="left:52.90px;top:227.62px" width="1.600" height="1.600" viewBox="0 0 2 2"><path d="M2 0V2H0Z" fill="#d2d2d2"/></svg>
<svg style="left:27.90px;top:232.28px" width="9.4" height="9.4" viewBox="0 0 10 10"><path d="M2.600 9.400C1.600 8 0.800 6.600 0.600 5.400C1.200 5 1.900 5.400 2.400 6.200V2C2.400 1.200 3.400 1.200 3.400 2V1.200C3.400 0.400 4.600 0.400 4.600 1.200V1.600C4.600 0.900 5.800 0.900 5.800 1.700V2.400C5.800 1.700 6.900 1.700 6.900 2.500V6.400C6.900 7.600 6.600 8.600 6 9.400Z" fill="#d2d2d2"/></svg>
<svg style="left:36.70px;top:240.28px" width="1.600" height="1.600" viewBox="0 0 2 2"><path d="M2 0V2H0Z" fill="#d2d2d2"/></svg>
<svg style="left:44.10px;top:232.28px" width="9.4" height="9.4" viewBox="0 0 10 10"><circle cx="4" cy="4" r="3" fill="none" stroke="#d2d2d2" stroke-width="0.900"/><path d="M6.200 6.200L9.200 9.200" stroke="#d2d2d2" stroke-width="1.200" stroke-linecap="round"/></svg>
<div class="abs" style="left:35.6px;top:258px;width:17.2px;height:16.8px;background:#000;border:0.600px solid #cfcfcf"></div>
<div class="abs" style="left:39.8px;top:262.2px;width:8.8px;height:8.4px;background:#535353;border:0.600px solid #cfcfcf"></div>
<div class="abs" style="left:25px;top:247.4px;width:18.4px;height:17.8px;background:#bdbfbe;border:0.600px solid #e6e6e6"></div>
<svg style="left:48.400px;top:247.800px" width="5.400" height="5.400" viewBox="0 0 10 10"><path d="M1.500 3C5 2 8 4 7.600 8" fill="none" stroke="#d2d2d2" stroke-width="1.600"/><path d="M0 3L3.500 0.500V5.500ZM7.600 10L5 6.500H10Z" fill="#d2d2d2"/></svg>
<div class="abs" style="left:25.6px;top:269.6px;width:3.6px;height:3.6px;background:#fff;border:0.400px solid #222"></div>
<div class="abs" style="left:27.6px;top:271.6px;width:3.6px;height:3.6px;background:#222;border:0.800px solid #fff"></div>
<div class="abs" style="left:25.200000000000003px;top:279.6px;width:9.2px;height:9.2px;background:#2e2e2e;"></div>
<div class="abs" style="left:27.2px;top:281.6px;width:5.2px;height:5.2px;background:#bdbdbd;border:0.500px solid #eee"></div>
<div class="abs" style="left:37.600px;top:281.600px;width:5.200px;height:5.200px;background:linear-gradient(90deg,#eee,#333);border:0.500px solid #ddd"></div>
<svg style="left:48.200px;top:281.600px" width="5.200" height="5.200" viewBox="0 0 10 10"><rect width="10" height="10" fill="#fff"/><path d="M0 10L10 0" stroke="#e8392b" stroke-width="2.400"/></svg>
<div class="abs" style="left:25.2px;top:292.2px;width:9.2px;height:9.4px;background:#2e2e2e;"></div>
<svg style="left:26.6px;top:293.800px;opacity:1" width="6.400" height="6.400" viewBox="0 0 10 10"><circle cx="4" cy="4" r="3.200" fill="#d0d0d0"/><rect x="4" y="4" width="5.200" height="5.200" fill="#9a9a9a" stroke="#e0e0e0" stroke-width="0.800"/></svg>
<svg style="left:37.0px;top:293.800px;opacity:0.9" width="6.400" height="6.400" viewBox="0 0 10 10"><circle cx="4" cy="4" r="3.200" fill="#d0d0d0"/><rect x="4" y="4" width="5.200" height="5.200" fill="#9a9a9a" stroke="#e0e0e0" stroke-width="0.800"/></svg>
<svg style="left:47.599999999999994px;top:293.800px;opacity:0.35" width="6.400" height="6.400" viewBox="0 0 10 10"><circle cx="4" cy="4" r="3.200" fill="#d0d0d0"/><rect x="4" y="4" width="5.200" height="5.200" fill="#9a9a9a" stroke="#e0e0e0" stroke-width="0.800"/></svg>
<svg style="left:35.200px;top:306.400px" width="11.600" height="9" viewBox="0 0 14 11"><rect x="4.500" y="0.500" width="9" height="6.500" fill="#777" stroke="#d2d2d2" stroke-width="0.900"/><rect x="0.500" y="3.500" width="9" height="6.500" fill="#777" stroke="#d2d2d2" stroke-width="0.900"/></svg>
<div class="t" style="left:36.4px;top:324.4px;font-size:5.2px;color:#d6d6d6;letter-spacing:0.700px">•••</div>
<div class="abs" style="left:2.8px;top:273.8px;width:2.6px;height:2.6px;background:#fff;border:0.300px solid #222"></div>
<div class="abs" style="left:4.2px;top:275.2px;width:2.6px;height:2.6px;background:#222;border:0.600px solid #fff"></div>
<svg style="left:13.400px;top:273.400px" width="5" height="5" viewBox="0 0 10 10"><path d="M1.500 3C5 2 8 4 7.600 8" fill="none" stroke="#d2d2d2" stroke-width="1.600"/><path d="M0 3L3.500 0.500V5.500ZM7.600 10L5 6.500H10Z" fill="#d2d2d2"/></svg>
<div class="abs" style="left:8.6px;top:287.4px;width:9.2px;height:9.2px;background:#000;border:0.500px solid #cfcfcf"></div>
<div class="abs" style="left:11px;top:289.8px;width:4.4px;height:4.4px;background:#535353;border:0.500px solid #cfcfcf"></div>
<div class="abs" style="left:3px;top:282.2px;width:10px;height:10px;background:#bdbfbe;border:0.500px solid #e6e6e6"></div>
<div class="abs" style="left:3.4px;top:302px;width:3.4px;height:3.4px;background:#c8c8c8;"></div>
<div class="abs" style="left:7.600px;top:302px;width:3.400px;height:3.400px;background:linear-gradient(90deg,#eee,#555)"></div>
<svg style="left:13px;top:301.400px" width="4.600" height="4.600" viewBox="0 0 10 10"><rect width="10" height="10" fill="#fff"/><path d="M0 10L10 0" stroke="#e8392b" stroke-width="2.600"/></svg>
<svg style="left:7.400px;top:310.600px" width="6.400" height="6.400" viewBox="0 0 10 10"><circle cx="4" cy="4" r="3.200" fill="#d0d0d0"/><rect x="4" y="4" width="5.200" height="5.200" fill="#9a9a9a" stroke="#e0e0e0" stroke-width="0.800"/></svg>
<svg style="left:5.400px;top:322.400px" width="10.400" height="8" viewBox="0 0 14 11"><rect x="4.500" y="0.500" width="9" height="6.500" fill="#777" stroke="#d2d2d2" stroke-width="0.900"/><rect x="0.500" y="3.500" width="9" height="6.500" fill="#777" stroke="#d2d2d2" stroke-width="0.900"/></svg>
<div class="t" style="left:6.6px;top:341.2px;font-size:5.2px;color:#d6d6d6;letter-spacing:0.700px">•••</div>
<div class="abs" style="left:60.8px;top:64.8px;width:803.6px;height:8.8px;background:#3b3b3b;"></div>
<div class="abs" style="left:60.8px;top:64.8px;width:8.4px;height:489.6px;background:#3b3b3b;"></div>
<svg style="left:0;top:0" width="1080" height="608" viewBox="0 0 1080 608"><path d="M71.00 72.200V73.600M74.50 72.200V73.600M78.00 72.200V73.600M81.50 64.800V73.600M85.00 72.200V73.600M88.50 72.200V73.600M92.00 72.200V73.600M95.50 72.200V73.600M99.00 71V73.600M102.50 72.200V73.600M106.00 72.200V73.600M109.50 72.200V73.600M113.00 72.200V73.600M116.50 64.800V73.600M120.00 72.200V73.600M123.50 72.200V73.600M127.00 72.200V73.600M130.50 72.200V73.600M134.00 71V73.600M137.50 72.200V73.600M141.00 72.200V73.600M144.50 72.200V73.600M148.00 72.200V73.600M151.50 64.800V73.600M155.00 72.200V73.600M158.50 72.200V73.600M162.00 72.200V73.600M165.50 72.200V73.600M169.00 71V73.600M172.50 72.200V73.600M176.00 72.200V73.600M179.50 72.200V73.600M183.00 72.200V73.600M186.50 64.800V73.600M190.00 72.200V73.600M193.50 72.200V73.600M197.00 72.200V73.600M200.50 72.200V73.600M204.00 71V73.600M207.50 72.200V73.600M211.00 72.200V73.600M214.50 72.200V73.600M218.00 72.200V73.600M221.50 64.800V73.600M225.00 72.200V73.600M228.50 72.200V73.600M232.00 72.200V73.600M235.50 72.200V73.600M239.00 71V73.600M242.50 72.200V73.600M246.00 72.200V73.600M249.50 72.200V73.600M253.00 72.200V73.600M256.50 64.800V73.600M260.00 72.200V73.600M263.50 72.200V73.600M267.00 72.200V73.600M270.50 72.200V73.600M274.00 71V73.600M277.50 72.200V73.600M281.00 72.200V73.600M284.50 72.200V73.600M288.00 72.200V73.600M291.50 64.800V73.600M295.00 72.200V73.600M298.50 72.200V73.600M302.00 72.200V73.600M305.50 72.200V73.600M309.00 71V73.600M312.50 72.200V73.600M316.00 72.200V73.600M319.50 72.200V73.600M323.00 72.200V73.600M326.50 64.800V73.600M330.00 72.200V73.600M333.50 72.200V73.600M337.00 72.200V73.600M340.50 72.200V73.600M344.00 71V73.600M347.50 72.200V73.600M351.00 72.200V73.600M354.50 72.200V73.600M358.00 72.200V73.600M361.50 64.800V73.600M365.00 72.200V73.600M368.50 72.200V73.600M372.00 72.200V73.600M375.50 72.200V73.600M379.00 71V73.600M382.50 72.200V73.600M386.00 72.200V73.600M389.50 72.200V73.600M393.00 72.200V73.600M396.50 64.800V73.600M400.00 72.200V73.600M403.50 72.200V73.600M407.00 72.200V73.600M410.50 72.200V73.600M414.00 71V73.600M417.50 72.200V73.600M421.00 72.200V73.600M424.50 72.200V73.600M428.00 72.200V73.600M431.50 64.800V73.600M435.00 72.200V73.600M438.50 72.200V73.600M442.00 72.200V73.600M445.50 72.200V73.600M449.00 71V73.600M452.50 72.200V73.600M456.00 72.200V73.600M459.50 72.200V73.600M463.00 72.200V73.600M466.50 64.800V73.600M470.00 72.200V73.600M473.50 72.200V73.600M477.00 72.200V73.600M480.50 72.200V73.600M484.00 71V73.600M487.50 72.200V73.600M491.00 72.200V73.600M494.50 72.200V73.600M498.00 72.200V73.600M501.50 64.800V73.600M505.00 72.200V73.600M508.50 72.200V73.600M512.00 72.200V73.600M515.50 72.200V73.600M519.00 71V73.600M522.50 72.200V73.600M526.00 72.200V73.600M529.50 72.200V73.600M533.00 72.200V73.600M536.50 64.800V73.600M540.00 72.200V73.600M543.50 72.200V73.600M547.00 72.200V73.600M550.50 72.200V73.600M554.00 71V73.600M557.50 72.200V73.600M561.00 72.200V73.600M564.50 72.200V73.600M568.00 72.200V73.600M571.50 64.800V73.600M575.00 72.200V73.600M578.50 72.200V73.600M582.00 72.200V73.600M585.50 72.200V73.600M589.00 71V73.600M592.50 72.200V73.600M596.00 72.200V73.600M599.50 72.200V73.600M603.00 72.200V73.600M606.50 64.800V73.600M610.00 72.200V73.600M613.50 72.200V73.600M617.00 72.200V73.600M620.50 72.200V73.600M624.00 71V73.600M627.50 72.200V73.600M631.00 72.200V73.600M634.50 72.200V73.600M638.00 72.200V73.600M641.50 64.800V73.600M645.00 72.200V73.600M648.50 72.200V73.600M652.00 72.200V73.600M655.50 72.200V73.600M659.00 71V73.600M662.50 72.200V73.600M666.00 72.200V73.600M669.50 72.200V73.600M673.00 72.200V73.600M676.50 64.800V73.600M680.00 72.200V73.600M683.50 72.200V73.600M687.00 72.200V73.600M690.50 72.200V73.600M694.00 71V73.600M697.50 72.200V73.600M701.00 72.200V73.600M704.50 72.200V73.600M708.00 72.200V73.600M711.50 64.800V73.600M715.00 72.200V73.600M718.50 72.200V73.600M722.00 72.200V73.600M725.50 72.200V73.600M729.00 71V73.600M732.50 72.200V73.600M736.00 72.200V73.600M739.50 72.200V73.600M743.00 72.200V73.600M746.50 64.800V73.600M750.00 72.200V73.600M753.50 72.200V73.600M757.00 72.200V73.600M760.50 72.200V73.600M764.00 71V73.600M767.50 72.200V73.600M771.00 72.200V73.600M774.50 72.200V73.600M778.00 72.200V73.600M781.50 64.800V73.600M785.00 72.200V73.600M788.50 72.200V73.600M792.00 72.200V73.600M795.50 72.200V73.600M799.00 71V73.600M802.50 72.200V73.600M806.00 72.200V73.600M809.50 72.200V73.600M813.00 72.200V73.600M816.50 64.800V73.600M820.00 72.200V73.600M823.50 72.200V73.600M827.00 72.200V73.600M830.50 72.200V73.600M834.00 71V73.600M837.50 72.200V73.600M841.00 72.200V73.600M844.50 72.200V73.600M848.00 72.200V73.600M851.50 64.800V73.600M855.00 72.200V73.600M858.50 72.200V73.600M862.00 72.200V73.600" stroke="#747474" stroke-width="0.500" fill="none"/></svg>
<svg style="left:0;top:0" width="1080" height="608" viewBox="0 0 1080 608"><path d="M67.800 75.30H69.200M66.600 78.80H69.200M67.800 82.30H69.200M67.800 85.80H69.200M67.800 89.30H69.200M67.800 92.80H69.200M60.800 96.30H69.200M67.800 99.80H69.200M67.800 103.30H69.200M67.800 106.80H69.200M67.800 110.30H69.200M66.600 113.80H69.200M67.800 117.30H69.200M67.800 120.80H69.200M67.800 124.30H69.200M67.800 127.80H69.200M60.800 131.30H69.200M67.800 134.80H69.200M67.800 138.30H69.200M67.800 141.80H69.200M67.800 145.30H69.200M66.600 148.80H69.200M67.800 152.30H69.200M67.800 155.80H69.200M67.800 159.30H69.200M67.800 162.80H69.200M60.800 166.30H69.200M67.800 169.80H69.200M67.800 173.30H69.200M67.800 176.80H69.200M67.800 180.30H69.200M66.600 183.80H69.200M67.800 187.30H69.200M67.800 190.80H69.200M67.800 194.30H69.200M67.800 197.80H69.200M60.800 201.30H69.200M67.800 204.80H69.200M67.800 208.30H69.200M67.800 211.80H69.200M67.800 215.30H69.200M66.600 218.80H69.200M67.800 222.30H69.200M67.800 225.80H69.200M67.800 229.30H69.200M67.800 232.80H69.200M60.800 236.30H69.200M67.800 239.80H69.200M67.800 243.30H69.200M67.800 246.80H69.200M67.800 250.30H69.200M66.600 253.80H69.200M67.800 257.30H69.200M67.800 260.80H69.200M67.800 264.30H69.200M67.800 267.80H69.200M60.800 271.30H69.200M67.800 274.80H69.200M67.800 278.30H69.200M67.800 281.80H69.200M67.800 285.30H69.200M66.600 288.80H69.200M67.800 292.30H69.200M67.800 295.80H69.200M67.800 299.30H69.200M67.800 302.80H69.200M60.800 306.30H69.200M67.800 309.80H69.200M67.800 313.30H69.200M67.800 316.80H69.200M67.800 320.30H69.200M66.600 323.80H69.200M67.800 327.30H69.200M67.800 330.80H69.200M67.800 334.30H69.200M67.800 337.80H69.200M60.800 341.30H69.200M67.800 344.80H69.200M67.800 348.30H69.200M67.800 351.80H69.200M67.800 355.30H69.200M66.600 358.80H69.200M67.800 362.30H69.200M67.800 365.80H69.200M67.800 369.30H69.200M67.800 372.80H69.200M60.800 376.30H69.200M67.800 379.80H69.200M67.800 383.30H69.200M67.800 386.80H69.200M67.800 390.30H69.200M66.600 393.80H69.200M67.800 397.30H69.200M67.800 400.80H69.200M67.800 404.30H69.200M67.800 407.80H69.200M60.800 411.30H69.200M67.800 414.80H69.200M67.800 418.30H69.200M67.800 421.80H69.200M67.800 425.30H69.200M66.600 428.80H69.200M67.800 432.30H69.200M67.800 435.80H69.200M67.800 439.30H69.200M67.800 442.80H69.200M60.800 446.30H69.200M67.800 449.80H69.200M67.800 453.30H69.200M67.800 456.80H69.200M67.800 460.30H69.200M66.600 463.80H69.200M67.800 467.30H69.200M67.800 470.80H69.200M67.800 474.30H69.200M67.800 477.80H69.200M60.800 481.30H69.200M67.800 484.80H69.200M67.800 488.30H69.200M67.800 491.80H69.200M67.800 495.30H69.200M66.600 498.80H69.200M67.800 502.30H69.200M67.800 505.80H69.200M67.800 509.30H69.200M67.800 512.80H69.200M60.800 516.30H69.200M67.800 519.80H69.200M67.800 523.30H69.200M67.800 526.80H69.200M67.800 530.30H69.200M66.600 533.80H69.200M67.800 537.30H69.200M67.800 540.80H69.200M67.800 544.30H69.200M67.800 547.80H69.200M60.800 551.30H69.200" stroke="#747474" stroke-width="0.500" fill="none"/></svg>
<div class="abs" style="left:60.8px;top:64.8px;width:8.4px;height:8.8px;background:#3b3b3b;border-right:0.500px dotted #666;border-bottom:0.500px dotted #666"></div>
<div class="t" style="left:82.7px;top:68px;font-size:4.6px;color:#b4b4b4;letter-spacing:-0.150px">30</div>
<div class="t" style="left:117.7px;top:68px;font-size:4.6px;color:#b4b4b4;letter-spacing:-0.150px">40</div>
<div class="t" style="left:152.7px;top:68px;font-size:4.6px;color:#b4b4b4;letter-spacing:-0.150px">50</div>
<div class="t" style="left:187.7px;top:68px;font-size:4.6px;color:#b4b4b4;letter-spacing:-0.150px">60</div>
<div class="t" style="left:222.7px;top:68px;font-size:4.6px;color:#b4b4b4;letter-spacing:-0.150px">70</div>
<div class="t" style="left:257.7px;top:68px;font-size:4.6px;color:#b4b4b4;letter-spacing:-0.150px">80</div>
<div class="t" style="left:292.7px;top:68px;font-size:4.6px;color:#b4b4b4;letter-spacing:-0.150px">90</div>
<div class="t" style="left:327.7px;top:68px;font-size:4.6px;color:#b4b4b4;letter-spacing:-0.150px">100</div>
<div class="t" style="left:362.7px;top:68px;font-size:4.6px;color:#b4b4b4;letter-spacing:-0.150px">110</div>
<div class="t" style="left:397.7px;top:68px;font-size:4.6px;color:#b4b4b4;letter-spacing:-0.150px">120</div>
<div class="t" style="left:432.7px;top:68px;font-size:4.6px;color:#b4b4b4;letter-spacing:-0.150px">130</div>
<div class="t" style="left:467.7px;top:68px;font-size:4.6px;color:#b4b4b4;letter-spacing:-0.150px">140</div>
<div class="t" style="left:502.7px;top:68px;font-size:4.6px;color:#b4b4b4;letter-spacing:-0.150px">150</div>
<div class="t" style="left:537.7px;top:68px;font-size:4.6px;color:#b4b4b4;letter-spacing:-0.150px">160</div>
<div class="t" style="left:572.7px;top:68px;font-size:4.6px;color:#b4b4b4;letter-spacing:-0.150px">170</div>
<div class="t" style="left:607.7px;top:68px;font-size:4.6px;color:#b4b4b4;letter-spacing:-0.150px">180</div>
<div class="t" style="left:642.7px;top:68px;font-size:4.6px;color:#b4b4b4;letter-spacing:-0.150px">190</div>
<div class="t" style="left:677.7px;top:68px;font-size:4.6px;color:#b4b4b4;letter-spacing:-0.150px">200</div>
<div class="t" style="left:712.7px;top:68px;font-size:4.6px;color:#b4b4b4;letter-spacing:-0.150px">210</div>
<div class="t" style="left:747.7px;top:68px;font-size:4.6px;color:#b4b4b4;letter-spacing:-0.150px">220</div>
<div class="t" style="left:782.7px;top:68px;font-size:4.6px;color:#b4b4b4;letter-spacing:-0.150px">230</div>
<div class="t" style="left:817.7px;top:68px;font-size:4.6px;color:#b4b4b4;letter-spacing:-0.150px">240</div>
<div class="t" style="left:852.7px;top:68px;font-size:4.6px;color:#b4b4b4;letter-spacing:-0.150px">250</div>
<div class="t" style="left:62.4px;top:80.89999999999999px;font-size:4.4px;color:#b4b4b4;">1</div>
<div class="t" style="left:62.4px;top:84.89999999999999px;font-size:4.4px;color:#b4b4b4;">8</div>
<div class="t" style="left:62.4px;top:88.89999999999999px;font-size:4.4px;color:#b4b4b4;">0</div>
<div class="t" style="left:62.4px;top:115.9px;font-size:4.4px;color:#b4b4b4;">1</div>
<div class="t" style="left:62.4px;top:119.9px;font-size:4.4px;color:#b4b4b4;">7</div>
<div class="t" style="left:62.4px;top:123.9px;font-size:4.4px;color:#b4b4b4;">0</div>
<div class="t" style="left:62.4px;top:150.9px;font-size:4.4px;color:#b4b4b4;">1</div>
<div class="t" style="left:62.4px;top:154.9px;font-size:4.4px;color:#b4b4b4;">6</div>
<div class="t" style="left:62.4px;top:158.9px;font-size:4.4px;color:#b4b4b4;">0</div>
<div class="t" style="left:62.4px;top:185.9px;font-size:4.4px;color:#b4b4b4;">1</div>
<div class="t" style="left:62.4px;top:189.9px;font-size:4.4px;color:#b4b4b4;">5</div>
<div class="t" style="left:62.4px;top:193.9px;font-size:4.4px;color:#b4b4b4;">0</div>
<div class="t" style="left:62.4px;top:220.9px;font-size:4.4px;color:#b4b4b4;">1</div>
<div class="t" style="left:62.4px;top:224.9px;font-size:4.4px;color:#b4b4b4;">4</div>
<div class="t" style="left:62.4px;top:228.9px;font-size:4.4px;color:#b4b4b4;">0</div>
<div class="t" style="left:62.4px;top:255.9px;font-size:4.4px;color:#b4b4b4;">1</div>
<div class="t" style="left:62.4px;top:259.9px;font-size:4.4px;color:#b4b4b4;">3</div>
<div class="t" style="left:62.4px;top:263.9px;font-size:4.4px;color:#b4b4b4;">0</div>
<div class="t" style="left:62.4px;top:290.90000000000003px;font-size:4.4px;color:#b4b4b4;">1</div>
<div class="t" style="left:62.4px;top:294.90000000000003px;font-size:4.4px;color:#b4b4b4;">2</div>
<div class="t" style="left:62.4px;top:298.90000000000003px;font-size:4.4px;color:#b4b4b4;">0</div>
<div class="t" style="left:62.4px;top:325.90000000000003px;font-size:4.4px;color:#b4b4b4;">1</div>
<div class="t" style="left:62.4px;top:329.90000000000003px;font-size:4.4px;color:#b4b4b4;">1</div>
<div class="t" style="left:62.4px;top:333.90000000000003px;font-size:4.4px;color:#b4b4b4;">0</div>
<div class="t" style="left:62.4px;top:360.90000000000003px;font-size:4.4px;color:#b4b4b4;">1</div>
<div class="t" style="left:62.4px;top:364.90000000000003px;font-size:4.4px;color:#b4b4b4;">0</div>
<div class="t" style="left:62.4px;top:368.90000000000003px;font-size:4.4px;color:#b4b4b4;">0</div>
<div class="t" style="left:62.4px;top:395.90000000000003px;font-size:4.4px;color:#b4b4b4;">9</div>
<div class="t" style="left:62.4px;top:399.90000000000003px;font-size:4.4px;color:#b4b4b4;">0</div>
<div class="t" style="left:62.4px;top:430.90000000000003px;font-size:4.4px;color:#b4b4b4;">8</div>
<div class="t" style="left:62.4px;top:434.90000000000003px;font-size:4.4px;color:#b4b4b4;">0</div>
<div class="t" style="left:62.4px;top:465.90000000000003px;font-size:4.4px;color:#b4b4b4;">7</div>
<div class="t" style="left:62.4px;top:469.90000000000003px;font-size:4.4px;color:#b4b4b4;">0</div>
<div class="t" style="left:62.4px;top:500.9px;font-size:4.4px;color:#b4b4b4;">6</div>
<div class="t" style="left:62.4px;top:504.9px;font-size:4.4px;color:#b4b4b4;">0</div>
<div class="t" style="left:62.4px;top:535.9px;font-size:4.4px;color:#b4b4b4;">5</div>
<div class="t" style="left:62.4px;top:539.9px;font-size:4.4px;color:#b4b4b4;">0</div>
<div class="abs" style="left:69.2px;top:73.6px;width:795.2px;height:480.8px;background:#606060;"></div>
<svg style="left:69.200px;top:73.600px;overflow:hidden" width="795.200" height="480.800" viewBox="69.200 73.600 795.200 480.800"><rect x="153.900" y="79.400" width="624.800" height="467.200" fill="#fff" stroke="#3a3a3a" stroke-width="0.700"/><clipPath id="imgclip"><rect x="187.200" y="73.600" width="313.800" height="480.800"/></clipPath><g clip-path="url(#imgclip)"><rect x="187.200" y="73.600" width="313.800" height="6" fill="#fff"/><rect x="187.200" y="546.400" width="313.800" height="8" fill="#fff"/><g fill="#e6e6e6" stroke="#808080" stroke-width="1" stroke-linejoin="round"><path d="M233 70L220.300 117.400L201.800 242L188 272.500L199.500 288L218 282L217.100 246.200L237.600 184.500L267.500 70Z"/><path d="M454.500 70L467.200 117.400L485.700 242L499.500 272.500L488 288L469.500 282L470.400 246.200L449.900 184.500L420 70Z"/><path d="M285 70L290.500 100L397 100L402.500 70Z"/><path d="M281 470L281.200 520L285 556L319.300 556L321 515L321.500 470Z"/><path d="M406.500 470L406.300 520L402.500 556L368.200 556L366.500 515L366 470Z"/></g><g fill="none" stroke="#808080" stroke-width="0.400" stroke-dasharray="1 0.800"><path d="M228.900 93L251 97.400M201.800 242L217.100 246.200M458.600 93L436.500 97.400M485.700 242L470.400 246.200M313.700 73L317.500 98M373.800 73L370 98M304.500 500V556M383.200 480V556"/></g><rect x="187.200" y="73.600" width="313.800" height="5.400" fill="#000" opacity="0.330"/><rect x="187.200" y="547" width="313.800" height="7.600" fill="#000" opacity="0.330"/></g><path d="M153.900 78.900H778.700M153.900 546.900H778.700" stroke="#454545" stroke-width="1.200" fill="none"/><g stroke="#111" stroke-width="1.300" stroke-linejoin="round" stroke-linecap="round" fill="#fff"><path d="M382 308L362 488L463.600 471.800L445.200 308Z" fill="#b5b7b6"/><path d="M416.500 330L430.100 438.500L371.300 446M419 330L432.100 441L370.400 450M432.100 441L463.400 471.400" fill="none" stroke-width="1.150"/><path d="M286.400 100.400Q344 93.400 401.700 100.200Q344 105 286.400 100.400Z" fill="#a4b0b0"/><path d="M282.200 110.800L286.400 100.400Q344 104.800 401.700 100.200L415.600 138.600L402 140L300 125Z"/><path d="M300.200 98.900L296.100 115.700M311.700 98L308.200 119.200M324.800 97.300L322.500 123.300M337.200 97L337.100 126.500M350.200 97L351.700 129.300M363 97.300L367 132.400M376 98L383.600 135.100M388.200 98.800L398.900 137" fill="none" stroke-width="1.150"/><path d="M415.600 138.600L427 150.700L427 186Q431.500 197 433.500 210L446.500 300L450 315.600L431 320.800L428 200Z"/><path d="M402.600 138.600L384.400 324.700L405 316.400L405.800 324.700L412.400 321.400L415.600 155.500Z"/><path d="M401.800 155.500Q394 215 406.200 322" fill="none" stroke-width="1.150"/><path d="M404 156.700Q412 175 415.600 196" fill="none" stroke-width="1.150"/><path d="M415.600 138.600L415.600 155.500L412.400 330.400L430.500 330.400L430 230L427 186L427 150.700Z"/><path d="M402.600 138.600H415.600V155.500Q409 157 401.800 155.500Z"/><path d="M280 111Q355 133 402.600 138.600L360.700 528.200Q286 520.800 219.400 499.100C220.3 489.2 222.7 464.5 225.1 440.0C227.5 415.5 231.7 371.2 233.7 352.0C235.7 332.8 235.3 339.9 237.0 325.0C238.7 310.1 241.7 280.0 243.7 262.5C245.7 245.0 247.4 230.4 248.8 220.0C250.2 209.6 251.1 206.5 252.3 200.0C253.5 193.5 253.9 188.6 256.0 181.0C258.1 173.4 260.6 165.9 264.6 154.2C268.6 142.5 277.4 118.2 280.0 111.0Z"/><path d="M264.600 154.200L313.700 165.200L307 189.400Q305.800 193.800 301.400 192.600L258 180.200Q252.600 178.400 254.800 173.600Z"/><path d="M264.200 155.800L313.300 166.800" fill="none" stroke-width="0.700"/></g><g stroke="#111" stroke-width="0.950" stroke-dasharray="1 0.800" fill="none"><path d="M281 113.200Q355 135 400.400 140.400L358.800 526Q286 518.600 220 497"/><path d="M286.600 102.600Q344 107 402.600 102.600"/><path d="M403 153.600H415.300M404 141H414.500"/><path d="M417.600 156L414.600 328.400H428.600L428.200 230L425.400 187V152"/><path d="M429 186Q431 197 432 210L444.900 300L448 314.600L431.500 319"/><path d="M386.500 322L404 315"/><path d="M444.500 322L461.400 470L368 485"/></g><g stroke="#111" stroke-width="1.300" stroke-linejoin="round" stroke-linecap="round" fill="#fff"><path d="M608 488L614.800 528.900Q690 523.500 755.100 499L700 490Z" fill="#b5b7b6"/><path d="M614.800 528.900L634.700 498.400L659.800 495.400M634.700 498.400V492M636.500 500L660 497.200" fill="none" stroke-width="0.900"/><path d="M573.300 101.800Q631 94.200 688.700 101.800Q631 106 573.300 101.800Z" fill="#a4b0b0"/><path d="M558.700 139.500L573.300 101.800Q631 105.800 688.700 101.800L692.500 110.500L640 135Z"/><path d="M586.800 100L577 137M598.500 99.200L592.500 135M611.500 98.600L608 132.500M624.600 98.200L623.200 130.500M637.400 98.200L638.200 128M650.200 98.500L653.200 125M663.200 99.100L667.500 122M675.400 99.900L680 118.700" fill="none" stroke-width="1.150"/><path d="M558.700 139.500L547.500 151.200L546.200 178Q551 158 558.700 139.500Z"/><path d="M558.700 139.500C556.7 145.9 549.8 164.6 546.5 178.0C543.2 191.4 542.6 195.6 538.9 220.0C535.2 244.4 527.6 297.2 524.2 324.2C520.8 351.2 520.8 357.3 518.6 382.0C516.4 406.7 512.4 457.2 511.2 472.3Q631.700 496.500 755.100 499C753.1 479.5 746.2 412.6 743.0 382.0C739.8 351.4 739.4 342.0 735.8 315.3C732.2 288.6 726.3 249.2 721.5 222.0C716.7 194.8 711.4 170.4 707.0 152.0C702.6 133.6 697.0 118.2 695.0 111.5L692.500 110.500Q636.900 134 558.700 139.500Z"/><path d="M697 117C699.5 125.8 707.5 150.8 712.0 170.0C716.5 189.2 720.0 207.8 724.0 232.0C728.0 256.2 733.8 301.4 735.8 315.3" fill="none" stroke-width="1.150"/><path d="M631.400 130V491M587 138L583.200 168M672.500 123L678 168" fill="none" stroke-width="1.150"/></g><g stroke="#111" stroke-width="0.950" stroke-dasharray="1 0.800" fill="none"><path d="M561 141.400Q636.900 136 693 112.800"/><path d="M575 104.400Q631 103.400 688.800 104.400"/><path d="M513 471Q631.700 494.500 754 497"/><path d="M549 152.500L547.800 172"/><path d="M610.500 491L616.200 526.500Q690 521.500 750 500"/></g><g stroke="#4ff" stroke-width="0.500" fill="none" opacity="0.850"><path d="M69 100.800H865M69 137.800H865M69 324.600H865M69 528.200H865M219.300 73V555M236.300 73V555M343.800 73V555"/></g></svg>
<div class="abs" style="left:864.4px;top:64.8px;width:8.8px;height:489.6px;background:#4a4a4a;"></div>
<svg style="left:866.5999999999999px;top:68.0px" width="4.4" height="2.4" viewBox="0 0 4.4 2.4"><path d="M0.300 2.100L2.200 0.300L4.100 2.100" fill="none" stroke="#a8a8a8" stroke-width="0.9" stroke-linecap="round" stroke-linejoin="round"/></svg>
<svg style="left:866.5999999999999px;top:548.1999999999999px" width="4.4" height="2.4" viewBox="0 0 4.4 2.4"><path d="M0.300 0.300L2.2 2.1L4.1000000000000005 0.300" fill="none" stroke="#a8a8a8" stroke-width="0.9" stroke-linecap="round" stroke-linejoin="round"/></svg>
<div class="abs" style="left:865.2px;top:304px;width:7px;height:13.2px;background:#646464;border-radius:3.500px"></div>
<div class="abs" style="left:60.8px;top:554.4px;width:812.4px;height:8.4px;background:#4a4a4a;"></div>
<div class="abs" style="left:61.4px;top:554.6px;width:36.2px;height:7.8px;background:#444;border:0.400px solid #393939"></div>
<div class="t" style="left:64.6px;top:555.5px;font-size:6.8px;color:#dcdcdc;">155.289</div>
<svg style="left:91.89999999999999px;top:557.8px" width="3.8" height="2" viewBox="0 0 3.8 2"><path d="M0.300 0.300L1.9 1.7L3.5 0.300" fill="none" stroke="#cfcfcf" stroke-width="1" stroke-linecap="round" stroke-linejoin="round"/></svg>
<svg style="left:104.1px;top:556.6px" width="3" height="4" viewBox="0 0 3 4"><path d="M3 0L0 2L3 4Z" fill="#6e6e6e"/><rect x="-1.300" y="0" width="0.800" height="4" fill="#6e6e6e"/></svg>
<svg style="left:113.1px;top:556.6px" width="3" height="4" viewBox="0 0 3 4"><path d="M3 0L0 2L3 4Z" fill="#6e6e6e"/></svg>
<div class="abs" style="left:121.2px;top:554.6px;width:20.4px;height:7.8px;background:#444;border:0.400px solid #393939"></div>
<div class="t" style="left:123.2px;top:555.5px;font-size:6.8px;color:#dcdcdc;">1</div>
<svg style="left:144.5px;top:557.8px" width="3.8" height="2" viewBox="0 0 3.8 2"><path d="M0.300 0.300L1.9 1.7L3.5 0.300" fill="none" stroke="#cfcfcf" stroke-width="1" stroke-linecap="round" stroke-linejoin="round"/></svg>
<svg style="left:156.5px;top:556.6px" width="3" height="4" viewBox="0 0 3 4"><path d="M0 0L3 2L0 4Z" fill="#6e6e6e"/></svg>
<svg style="left:164.1px;top:556.6px" width="3" height="4" viewBox="0 0 3 4"><path d="M0 0L3 2L0 4Z" fill="#6e6e6e"/><rect x="3.500" y="0" width="0.800" height="4" fill="#6e6e6e"/></svg>
<div class="t" style="left:205.8px;top:556.3px;font-size:6.7px;color:#c8c8c8;">切换直接选择</div>
<svg style="left:282.3px;top:556.6px" width="3" height="4" viewBox="0 0 3 4"><path d="M0 0L3 2L0 4Z" fill="#dcdcdc"/></svg>
<svg style="left:292px;top:556.600px" width="2.400" height="4" viewBox="0 0 2.400 4"><path d="M2 0.300L0.400 2L2 3.700" fill="none" stroke="#9a9a9a" stroke-width="0.700"/></svg>
<svg style="left:858.800px;top:556.600px" width="2.400" height="4" viewBox="0 0 2.400 4"><path d="M0.400 0.300L2 2L0.400 3.700" fill="none" stroke="#9a9a9a" stroke-width="0.700"/></svg>
<div class="abs" style="left:572.4px;top:555.4px;width:14px;height:6.2px;background:#646464;border-radius:3.100px"></div>
<div class="abs" style="left:873.2px;top:49px;width:206.8px;height:513.8px;background:#474747;"></div>
<div class="abs" style="left:873.2px;top:49px;width:206.8px;height:6.8px;background:#424242;"></div>
<div class="abs" style="left:874.4px;top:55.8px;width:19.6px;height:507px;background:#535353;"></div>
<div class="abs" style="left:874.4px;top:91.3px;width:19.6px;height:1.3px;background:#454545;"></div>
<div class="abs" style="left:874.4px;top:129px;width:19.6px;height:1.3px;background:#454545;"></div>
<div class="abs" style="left:874.4px;top:151.3px;width:19.6px;height:1.3px;background:#454545;"></div>
<div class="abs" style="left:874.4px;top:215.4px;width:19.6px;height:1.3px;background:#454545;"></div>
<svg style="left:886.8px;top:50.8px" width="4.200" height="3.200" viewBox="0 0 4.200 3.200"><path d="M1.700 0.300L0.300 1.600L1.700 2.900M3.900 0.300L2.500 1.600L3.900 2.900" fill="none" stroke="#9a9a9a" stroke-width="0.700"/></svg>
<svg style="left:1072px;top:50.8px" width="4.200" height="3.200" viewBox="0 0 4.200 3.200"><path d="M0.300 0.300L1.700 1.600L0.300 2.900M2.500 0.300L3.900 1.600L2.500 2.900" fill="none" stroke="#9a9a9a" stroke-width="0.700"/></svg>
<div class="abs" style="left:879.4px;top:58px;width:9.600px;height:1.400px;background:repeating-linear-gradient(90deg,#3e3e3e 0,#3e3e3e 0.800px,transparent 0.800px,transparent 1.600px)"></div>
<div class="abs" style="left:879.4px;top:94.6px;width:9.600px;height:1.400px;background:repeating-linear-gradient(90deg,#3e3e3e 0,#3e3e3e 0.800px,transparent 0.800px,transparent 1.600px)"></div>
<div class="abs" style="left:879.4px;top:132.2px;width:9.600px;height:1.400px;background:repeating-linear-gradient(90deg,#3e3e3e 0,#3e3e3e 0.800px,transparent 0.800px,transparent 1.600px)"></div>
<div class="abs" style="left:879.4px;top:154.6px;width:9.600px;height:1.400px;background:repeating-linear-gradient(90deg,#3e3e3e 0,#3e3e3e 0.800px,transparent 0.800px,transparent 1.600px)"></div>
<svg style="left:878.9px;top:62.3px" width="11" height="11" viewBox="0 0 11 11"><text x="4.600" y="6.600" font-size="8.500" fill="#d4d4d4" font-family="Liberation Sans, sans-serif">A</text><rect x="1.200" y="5.800" width="3.600" height="3.600" fill="#535353" stroke="#d4d4d4" stroke-width="0.600"/><circle cx="4" cy="8.400" r="1.500" fill="none" stroke="#d4d4d4" stroke-width="0.500"/></svg>
<svg style="left:878.9px;top:77.5px" width="11" height="11" viewBox="0 0 11 11"><path d="M5.200 1.600h4.200v6.800h-1v-5.800h-0.800v5.800h-1v-3.400a1.800 1.800 0 0 1-1.400-3.400z" fill="#d4d4d4"/><rect x="1.200" y="5.800" width="3.600" height="3.600" fill="#535353" stroke="#d4d4d4" stroke-width="0.600"/><circle cx="4" cy="8.400" r="1.500" fill="none" stroke="#d4d4d4" stroke-width="0.500"/></svg>
<svg style="left:878.9px;top:98.9px" width="11" height="11" viewBox="0 0 11 11"><circle cx="5.500" cy="5.500" r="2.900" fill="#d4d4d4"/><g stroke="#d4d4d4" stroke-width="0.600"><path d="M5.500 0.600v1.400M5.500 9v1.400M0.600 5.500h1.400M9 5.500h1.400M2 2l1 1M8 8l1 1M2 9l1-1M8 3l1-1M3.600 1l0.500 1.200M7.400 1l-0.500 1.200M3.600 10l0.500-1.200M7.400 10l-0.500-1.200M1 3.600l1.200 0.500M1 7.400l1.200-0.500M10 3.600l-1.200 0.500M10 7.400l-1.200-0.500"/></g></svg>
<svg style="left:878.9px;top:114.3px" width="11" height="11" viewBox="0 0 11 11"><circle cx="4.400" cy="4.400" r="3.300" fill="#d4d4d4"/><circle cx="6.600" cy="6.600" r="3.300" fill="#9a9a9a" stroke="#d4d4d4" stroke-width="0.500"/></svg>
<svg style="left:878.9px;top:135.7px" width="11" height="11" viewBox="0 0 11 11"><rect x="1" y="1" width="6" height="6" rx="0.600" fill="none" stroke="#d4d4d4" stroke-width="0.800"/><rect x="4" y="4" width="6" height="6" rx="0.600" fill="#535353" stroke="#d4d4d4" stroke-width="0.800"/></svg>
<svg style="left:878.9px;top:155.9px" width="11" height="11" viewBox="0 0 11 11"><path d="M3.200 5.400h4.600l-0.400 5h-3.800z" fill="#d4d4d4"/><path d="M5.500 5.400V1M5.500 3.200L3.200 1.400M5.500 3.800L7.800 2" stroke="#d4d4d4" stroke-width="0.700" fill="none"/><circle cx="5.500" cy="1" r="0.800" fill="#d4d4d4"/><circle cx="3" cy="1.400" r="0.800" fill="#d4d4d4"/><circle cx="8" cy="2" r="0.800" fill="#d4d4d4"/></svg>
<svg style="left:878.9px;top:171.9px" width="11" height="11" viewBox="0 0 11 11"><path d="M0.800 2.600h9.400M0.800 5.500h9.400M0.800 8.400h9.400" stroke="#d4d4d4" stroke-width="1"/></svg>
<svg style="left:878.9px;top:186.5px" width="11" height="11" viewBox="0 0 11 11"><defs><linearGradient id="rgr" x1="0" x2="1"><stop offset="0" stop-color="#eee"/><stop offset="1" stop-color="#2a2a2a"/></linearGradient></defs><rect x="1.200" y="2.200" width="8.600" height="6.600" fill="url(#rgr)" stroke="#d4d4d4" stroke-width="0.600"/></svg>
<svg style="left:878.9px;top:200.9px" width="11" height="11" viewBox="0 0 11 11"><circle cx="5.500" cy="3" r="2.200" fill="#d4d4d4"/><circle cx="3" cy="6.200" r="2.200" fill="#d4d4d4"/><circle cx="8" cy="6.200" r="2.200" fill="#d4d4d4"/><path d="M5.500 5v5M4 10.200h3" stroke="#d4d4d4" stroke-width="1"/></svg>
<div class="abs" style="left:895.4px;top:55.8px;width:184.60000000000002px;height:507px;background:#535353;"></div>
<div class="abs" style="left:895.4px;top:55.8px;width:184.60000000000002px;height:14px;background:#474747;"></div>
<div class="abs" style="left:895.4px;top:55.8px;width:21.3px;height:14px;background:#4c4c4c;border-right:0.500px solid #404040"></div>
<div class="abs" style="left:940px;top:55.8px;width:32px;height:14px;background:#4c4c4c;border-right:0.500px solid #404040;border-left:0.500px solid #404040"></div>
<div class="abs" style="left:916.8px;top:55.8px;width:23.2px;height:14.2px;background:#535353;"></div>
<div class="t" style="left:900.6px;top:60.8px;font-size:5.6px;color:#bdbdbd;">色板</div>
<svg style="left:919.400px;top:60.600px" width="2.600" height="4.600" viewBox="0 0 2.600 4.600"><path d="M0.300 1.600L1.300 0.400L2.300 1.600M0.300 3L1.300 4.200L2.300 3" fill="none" stroke="#9a9a9a" stroke-width="0.500"/></svg>
<div class="t" style="left:924.6px;top:60.7px;font-size:5.8px;color:#f0f0f0;font-weight:bold">颜色</div>
<div class="t" style="left:945.4px;top:60.8px;font-size:5.6px;color:#bdbdbd;">颜色参考</div>
<svg style="left:1071.0px;top:61px" width="5.200" height="4" viewBox="0 0 5.200 4"><path d="M0 0.500H5.200M0 2H5.200M0 3.500H5.200" stroke="#bdbdbd" stroke-width="0.700"/></svg>
<svg style="left:898.800px;top:75.200px" width="6.800" height="6.800" viewBox="0 0 10 10"><rect width="10" height="10" fill="#fff"/><path d="M0 10L10 0" stroke="#e8392b" stroke-width="2"/></svg>
<div class="abs" style="left:905.6px;top:75.2px;width:6.6px;height:6.8px;background:#000;"></div>
<div class="abs" style="left:912.2px;top:75.2px;width:6.6px;height:6.8px;background:#fff;"></div>
<div class="abs" style="left:899.200px;top:87.800px;width:171.200px;height:154.600px;background:linear-gradient(to bottom,rgba(255,255,255,1) 0%,rgba(255,255,255,0.900) 6%,rgba(255,255,255,0.500) 19%,rgba(255,255,255,0.150) 32%,rgba(255,255,255,0) 42%,rgba(0,0,0,0) 50%,rgba(0,0,0,0.120) 61%,rgba(0,0,0,0.440) 74%,rgba(0,0,0,0.780) 87%,rgba(0,0,0,0.940) 95%,rgba(0,0,0,1) 100%),linear-gradient(to right,#d8382c 0%,#e8843a 8%,#f5ee5a 16%,#c5d848 22%,#6eb544 30%,#5cae50 40%,#7cc4b0 47%,#5cb8ec 54%,#3f63b4 60%,#36429a 68%,#6a479c 76%,#a5489c 84%,#d93d8c 90%,#dc3c50 96%,#d8382c 100%)"></div>
<div class="abs" style="left:895.4px;top:246.4px;width:184.60000000000002px;height:1px;background:#3c3c3c;"></div>
<div class="abs" style="left:895.4px;top:247.4px;width:184.60000000000002px;height:14.2px;background:#474747;"></div>
<div class="abs" style="left:895.4px;top:247.4px;width:20.399999999999977px;height:14.2px;background:#4c4c4c;border-right:0.500px solid #404040"></div>
<div class="t" style="left:900px;top:252.6px;font-size:5.8px;color:#bdbdbd;">属性</div>
<div class="abs" style="left:915.8px;top:247.4px;width:22.200000000000045px;height:14.2px;background:#4c4c4c;border-right:0.500px solid #404040"></div>
<div class="t" style="left:921px;top:252.6px;font-size:5.8px;color:#bdbdbd;">库</div>
<div class="abs" style="left:958px;top:247.4px;width:21.700000000000045px;height:14.2px;background:#4c4c4c;border-right:0.500px solid #404040"></div>
<div class="t" style="left:963px;top:252.6px;font-size:5.8px;color:#bdbdbd;">变换</div>
<div class="abs" style="left:979.7px;top:247.4px;width:20.299999999999955px;height:14.2px;background:#4c4c4c;border-right:0.500px solid #404040"></div>
<div class="t" style="left:984px;top:252.6px;font-size:5.8px;color:#bdbdbd;">对齐</div>
<div class="abs" style="left:1000px;top:247.4px;width:39px;height:14.2px;background:#4c4c4c;border-right:0.500px solid #404040"></div>
<div class="t" style="left:1005px;top:252.6px;font-size:5.8px;color:#bdbdbd;">路径查找器</div>
<div class="abs" style="left:938px;top:247.4px;width:20px;height:14.4px;background:#535353;"></div>
<div class="t" style="left:942.4px;top:252.5px;font-size:5.8px;color:#f0f0f0;font-weight:bold">图层</div>
<svg style="left:1071.0px;top:252.6px" width="5.200" height="4" viewBox="0 0 5.200 4"><path d="M0 0.500H5.200M0 2H5.200M0 3.500H5.200" stroke="#bdbdbd" stroke-width="0.700"/></svg>
<div class="abs" style="left:898.8px;top:265.2px;width:177.6px;height:287px;background:#535353;border:0.500px solid #5e5e5e"></div>
<div class="abs" style="left:899px;top:276.2px;width:177px;height:0.6px;background:#5f5f5f;"></div>
<svg style="left:900.400px;top:268.90px" width="6.400" height="4.200" viewBox="0 0 12 8"><path d="M0.700 4C3 0.500 9 0.500 11.300 4C9 7.500 3 7.500 0.700 4Z" fill="#535353" stroke="#dcdcdc" stroke-width="1.100"/><circle cx="6" cy="4" r="1.900" fill="#dcdcdc"/></svg>
<div class="abs" style="left:921px;top:266.2px;width:2.3px;height:9.6px;background:#6cd15e;"></div>
<svg style="left:927.200px;top:268.80px" width="2.600" height="4.400" viewBox="0 0 2.600 4.400"><path d="M0.400 0.400L2.200 2.200L0.400 4" fill="none" stroke="#d8d8d8" stroke-width="0.800"/></svg>
<div class="abs" style="left:936.6px;top:266.29999999999995px;width:9.4px;height:9.2px;background:#fff;border:0.500px solid #3a3a3a"></div>
<div class="abs" style="left:938.6px;top:267.4px;width:2.2px;height:7px;background:#e6e6e6;"></div>
<div class="abs" style="left:942.2px;top:267.4px;width:2.2px;height:7px;background:#e6e6e6;"></div>
<div class="abs" style="left:940.2px;top:267.0px;width:0.5px;height:7.6px;background:#999;"></div>
<div class="abs" style="left:943.8px;top:267.0px;width:0.5px;height:7.6px;background:#999;"></div>
<div class="t" style="left:949px;top:267.79999999999995px;font-size:6.5px;color:#e2e2e2;">背面</div>
<svg style="left:1060.600px;top:268.40px" width="5.200" height="5.200" viewBox="0 0 5.200 5.200"><circle cx="2.600" cy="2.600" r="2" fill="none" stroke="#cfcfcf" stroke-width="0.600"/></svg>
<div class="abs" style="left:899px;top:287.25px;width:177px;height:0.6px;background:#5f5f5f;"></div>
<svg style="left:900.400px;top:279.95px" width="6.400" height="4.200" viewBox="0 0 12 8"><path d="M0.700 4C3 0.500 9 0.500 11.300 4C9 7.500 3 7.500 0.700 4Z" fill="#535353" stroke="#dcdcdc" stroke-width="1.100"/><circle cx="6" cy="4" r="1.900" fill="#dcdcdc"/></svg>
<div class="abs" style="left:921px;top:277.25px;width:2.3px;height:9.6px;background:#6cd15e;"></div>
<svg style="left:927.200px;top:279.85px" width="2.600" height="4.400" viewBox="0 0 2.600 4.400"><path d="M0.400 0.400L2.200 2.200L0.400 4" fill="none" stroke="#d8d8d8" stroke-width="0.800"/></svg>
<div class="abs" style="left:936.6px;top:277.34999999999997px;width:9.4px;height:9.2px;background:#fff;border:0.500px solid #3a3a3a"></div>
<div class="abs" style="left:938.6px;top:278.45px;width:2.2px;height:7px;background:#e6e6e6;"></div>
<div class="abs" style="left:942.2px;top:278.45px;width:2.2px;height:7px;background:#e6e6e6;"></div>
<div class="abs" style="left:940.2px;top:278.05px;width:0.5px;height:7.6px;background:#999;"></div>
<div class="abs" style="left:943.8px;top:278.05px;width:0.5px;height:7.6px;background:#999;"></div>
<div class="t" style="left:949px;top:278.84999999999997px;font-size:6.5px;color:#e2e2e2;">半身裙</div>
<svg style="left:1060.600px;top:279.45px" width="5.200" height="5.200" viewBox="0 0 5.200 5.200"><circle cx="2.600" cy="2.600" r="2" fill="none" stroke="#cfcfcf" stroke-width="0.600"/></svg>
<div class="abs" style="left:899px;top:298.3px;width:177px;height:0.6px;background:#5f5f5f;"></div>
<svg style="left:900.400px;top:291.00px" width="6.400" height="4.200" viewBox="0 0 12 8"><path d="M0.700 4C3 0.500 9 0.500 11.300 4C9 7.500 3 7.500 0.700 4Z" fill="#535353" stroke="#dcdcdc" stroke-width="1.100"/><circle cx="6" cy="4" r="1.900" fill="#dcdcdc"/></svg>
<div class="abs" style="left:921px;top:288.3px;width:2.3px;height:9.6px;background:#d4504a;"></div>
<svg style="left:927.200px;top:290.90px" width="2.600" height="4.400" viewBox="0 0 2.600 4.400"><path d="M0.400 0.400L2.200 2.200L0.400 4" fill="none" stroke="#d8d8d8" stroke-width="0.800"/></svg>
<div class="abs" style="left:936.6px;top:288.4px;width:9.4px;height:9.2px;background:#fff;border:0.500px solid #3a3a3a"></div>
<div class="t" style="left:949px;top:289.9px;font-size:6.5px;color:#e2e2e2;">参考线</div>
<svg style="left:1060.600px;top:290.50px" width="5.200" height="5.200" viewBox="0 0 5.200 5.200"><circle cx="2.600" cy="2.600" r="2" fill="none" stroke="#cfcfcf" stroke-width="0.600"/></svg>
<div class="abs" style="left:899px;top:309.34999999999997px;width:177px;height:0.6px;background:#5f5f5f;"></div>
<svg style="left:900.400px;top:302.05px" width="6.400" height="4.200" viewBox="0 0 12 8"><path d="M0.700 4C3 0.500 9 0.500 11.300 4C9 7.500 3 7.500 0.700 4Z" fill="#535353" stroke="#dcdcdc" stroke-width="1.100"/><circle cx="6" cy="4" r="1.900" fill="#dcdcdc"/></svg>
<div class="abs" style="left:921px;top:299.34999999999997px;width:2.3px;height:9.6px;background:#4e6fdc;"></div>
<svg style="left:927.200px;top:301.95px" width="2.600" height="4.400" viewBox="0 0 2.600 4.400"><path d="M0.400 0.400L2.200 2.200L0.400 4" fill="none" stroke="#d8d8d8" stroke-width="0.800"/></svg>
<div class="abs" style="left:936.6px;top:299.44999999999993px;width:9.4px;height:9.2px;background:#fff;border:0.500px solid #3a3a3a"></div>
<div class="abs" style="left:939.8px;top:300.54999999999995px;width:3px;height:7.4px;background:#ececec;"></div>
<div class="t" style="left:949px;top:300.94999999999993px;font-size:6.5px;color:#e2e2e2;">图层 1</div>
<svg style="left:1060.600px;top:301.55px" width="5.200" height="5.200" viewBox="0 0 5.200 5.200"><circle cx="2.600" cy="2.600" r="2" fill="none" stroke="#cfcfcf" stroke-width="0.600"/></svg>
<div class="abs" style="left:908.6px;top:265.4px;width:0.5px;height:44.2px;background:#5c5c5c;"></div>
<div class="abs" style="left:916.3px;top:265.4px;width:0.5px;height:44.2px;background:#5c5c5c;"></div>
<div class="abs" style="left:1057.4px;top:265.4px;width:0.5px;height:44.2px;background:#5c5c5c;"></div>
<svg style="left:1073.400px;top:276.800px" width="2.800" height="2.800" viewBox="0 0 3 3"><path d="M0 0H3V3Z" fill="#e6e6e6"/></svg>
<div class="t" style="left:898.8px;top:554.5px;font-size:6px;color:#e0e0e0;">4 图层</div>
<svg style="left:989.600px;top:554.200px" width="7" height="7" viewBox="0 0 10 10"><path d="M6 1.500H1.500V9H8V5" fill="none" stroke="#6e6e6e" stroke-width="0.900"/><path d="M5 5.500L9 1.500M6.500 1H9.500V4" fill="none" stroke="#6e6e6e" stroke-width="0.900"/></svg>
<svg style="left:1003.600px;top:554.200px" width="7" height="7" viewBox="0 0 10 10"><circle cx="6" cy="4" r="2.800" fill="none" stroke="#6e6e6e" stroke-width="1"/><path d="M4 6.200L1 9.400" stroke="#6e6e6e" stroke-width="1.200"/></svg>
<svg style="left:1016.400px;top:554.800px" width="7" height="6" viewBox="0 0 10 8"><rect x="0.500" y="0.500" width="7" height="5" fill="#6e6e6e"/><circle cx="7" cy="5" r="2.200" fill="#535353" stroke="#6e6e6e" stroke-width="0.800"/></svg>
<svg style="left:1030.400px;top:554.600px" width="8" height="6.400" viewBox="0 0 11 9"><path d="M1 0.500V3.500H4" fill="none" stroke="#6e6e6e" stroke-width="0.900"/><rect x="4.500" y="2.500" width="6" height="6" fill="#6e6e6e"/></svg>
<svg style="left:1044.600px;top:554.600px" width="7" height="6.600" viewBox="0 0 10 9"><path d="M0.500 0.500H9.500V8.500H3.500L0.500 5.500Z" fill="#e2e2e2"/><path d="M0.500 5.500H3.500V8.500" fill="#535353"/></svg>
<svg style="left:1058.600px;top:554.200px" width="6" height="7" viewBox="0 0 9 10"><path d="M1.500 3H7.500V9.500H1.500Z" fill="#6e6e6e"/><path d="M0.500 2H8.500M3 2V0.600H6V2" stroke="#6e6e6e" stroke-width="0.900" fill="none"/></svg>
<div class="abs" style="left:0;top:562.800px;width:1080px;height:45.200px;background:linear-gradient(to bottom,#9e9e9e 0,#b9b9b9 5px,#cdcdcd 13px,#dadada 26px,#e1e1e1 100%)"></div>
<div class="abs" style="left:1030px;top:562.800px;width:50px;height:45.200px;background:linear-gradient(to bottom,#9a9a9a 0,#b4b4b4 6px,#c6c6c6 18px,#d2d2d2 34px,#d8d8d8 100%)"></div>
<div class="abs" style="left:38.400px;top:563.200px;width:1003.200px;height:42.200px;background:#e0e0e0;border-radius:9px;box-shadow:0 0 1px rgba(0,0,0,0.120)"></div>
<svg width="0" height="0" style="left:0;top:0"><defs><linearGradient id="gFinderL" x1="0" y1="0" x2="0" y2="1"><stop offset="0" stop-color="#4fb4f7"/><stop offset="1" stop-color="#1b6be2"/></linearGradient><linearGradient id="gFinderR" x1="0" y1="0" x2="0" y2="1"><stop offset="0" stop-color="#f4f6fa"/><stop offset="1" stop-color="#c9d6ec"/></linearGradient><linearGradient id="gMail" x1="0" y1="0" x2="0" y2="1"><stop offset="0" stop-color="#2a7bf0"/><stop offset="1" stop-color="#62c4fb"/></linearGradient><linearGradient id="gMsg" x1="0" y1="0" x2="0" y2="1"><stop offset="0" stop-color="#6fdc6a"/><stop offset="1" stop-color="#3fbf44"/></linearGradient><linearGradient id="gPod" x1="0" y1="0" x2="0" y2="1"><stop offset="0" stop-color="#c66bea"/><stop offset="1" stop-color="#7f2fc4"/></linearGradient><linearGradient id="gStore" x1="0" y1="0" x2="0" y2="1"><stop offset="0" stop-color="#3fa0f5"/><stop offset="1" stop-color="#2566d8"/></linearGradient><linearGradient id="gMusic" x1="0" y1="0" x2="0" y2="1"><stop offset="0" stop-color="#fb5c69"/><stop offset="1" stop-color="#e9334a"/></linearGradient><linearGradient id="gNotes" x1="0" y1="0" x2="0" y2="1"><stop offset="0" stop-color="#fbd64a"/><stop offset="0.300" stop-color="#f8cf45"/><stop offset="0.310" stop-color="#f7f5f0"/><stop offset="1" stop-color="#e6e3dc"/></linearGradient><linearGradient id="gGear" x1="0" y1="0" x2="0" y2="1"><stop offset="0" stop-color="#b8b8ba"/><stop offset="1" stop-color="#6e6e72"/></linearGradient></defs></svg>
<svg style="left:43.90px;top:569.60px;" width="27.4" height="27.4" viewBox="0 0 30 30"><clipPath id="fc"><rect x="0.300" y="0.300" width="29.400" height="29.400" rx="6.800"/></clipPath><g clip-path="url(#fc)"><rect width="30" height="30" fill="url(#gFinderL)"/><path d="M17.500 0H30V30H19.500C18 25 17.600 21 17.800 17.500H14.500C14.600 11 15.600 5 17.500 0Z" fill="url(#gFinderR)"/><path d="M8 9v2.400M21.800 9v2.400" stroke="#26385a" stroke-width="1.500" stroke-linecap="round"/><path d="M5.500 19.500C11 24.500 19 24.500 24.500 19.500" fill="none" stroke="#26385a" stroke-width="1.100" stroke-linecap="round"/></g></svg>
<div class="abs" style="left:56.7px;top:602.200px;width:1.800px;height:1.800px;border-radius:50%;background:#444"></div>
<svg style="left:79.76px;top:569.60px;" width="27.4" height="27.4" viewBox="0 0 30 30"><rect x="0.300" y="0.300" width="29.400" height="29.400" rx="6.79" fill="#f0f0f2"/><rect x="5.2" y="5.2" width="5.600" height="5.600" rx="1.500" fill="#6fd34a"/><rect x="12.2" y="5.2" width="5.600" height="5.600" rx="1.500" fill="#f6b93b"/><rect x="19.2" y="5.2" width="5.600" height="5.600" rx="1.500" fill="#f08a2c"/><rect x="5.2" y="12.2" width="5.600" height="5.600" rx="1.500" fill="#e0392f"/><rect x="12.2" y="12.2" width="5.600" height="5.600" rx="1.500" fill="#a9adb3"/><rect x="19.2" y="12.2" width="5.600" height="5.600" rx="1.500" fill="#ee4266"/><rect x="5.2" y="19.2" width="5.600" height="5.600" rx="1.500" fill="#a24fe0"/><rect x="12.2" y="19.2" width="5.600" height="5.600" rx="1.500" fill="#2f9bf0"/><rect x="19.2" y="19.2" width="5.600" height="5.600" rx="1.500" fill="#4fd0b0"/></svg>
<svg style="left:115.62px;top:569.60px;" width="27.4" height="27.4" viewBox="0 0 30 30"><rect x="0.300" y="0.300" width="29.400" height="29.400" rx="6.79" fill="#f4f4f6"/><circle cx="15" cy="15" r="11.800" fill="#2f8af0"/><circle cx="15" cy="15" r="11.800" fill="none" stroke="#dfe8f5" stroke-width="0.500" stroke-dasharray="0.400 0.900" opacity="0.900" transform="scale(0.920) translate(1.300 1.300)"/><path d="M23.200 6.800L13.600 13.600L16.400 16.400Z" fill="#f0473d"/><path d="M6.800 23.200L13.600 13.600L16.400 16.400Z" fill="#f5f5f7"/></svg>
<svg style="left:151.48px;top:569.60px;" width="27.4" height="27.4" viewBox="0 0 30 30"><rect x="0.300" y="0.300" width="29.400" height="29.400" rx="6.79" fill="url(#gMail)"/><rect x="5" y="9" width="20" height="13" rx="1.800" fill="#f4f6fa"/><path d="M5.500 10L15 17.200L24.500 10" fill="none" stroke="#b9c2d0" stroke-width="1"/><path d="M5.500 21.500L12 15.200M24.500 21.500L18 15.200" stroke="#ccd3de" stroke-width="0.700"/></svg>
<svg style="left:187.34px;top:569.60px;" width="27.4" height="27.4" viewBox="0 0 30 30"><rect x="0.300" y="0.300" width="29.400" height="29.400" rx="6.79" fill="url(#gMsg)"/><path d="M15 6.500c5.400 0 9.600 3.500 9.600 7.800s-4.200 7.800-9.600 7.800c-1 0-2-0.100-2.900-0.400-1 0.900-2.600 1.600-4.300 1.700 0.800-0.800 1.400-1.900 1.500-2.900-2.400-1.400-3.900-3.700-3.900-6.200 0-4.300 4.200-7.800 9.600-7.800z" fill="#f2fbf1"/></svg>
<svg style="left:223.20px;top:569.60px;" width="27.4" height="27.4" viewBox="0 0 30 30"><rect x="26.600" y="6" width="3" height="4.500" fill="#f0a63a"/><rect x="26.600" y="10.800" width="3" height="4.500" fill="#8fce5a"/><rect x="26.600" y="15.600" width="3" height="4.500" fill="#52b3ee"/><rect x="26.600" y="20.400" width="3" height="4.500" fill="#e25a5a"/><rect x="0.300" y="0.300" width="27.600" height="29.400" rx="6.400" fill="#a98550"/><circle cx="14.200" cy="15" r="8.200" fill="#8f6f42" stroke="#7c5f36" stroke-width="0.500"/><circle cx="14.200" cy="12.400" r="3" fill="#b18f5c"/><path d="M8.200 20.400c1.200-3.400 3.400-4.200 6-4.200s4.800 0.800 6 4.200a8.200 8.200 0 0 1-12 0z" fill="#b18f5c"/></svg>
<svg style="left:259.06px;top:569.60px;" width="27.4" height="27.4" viewBox="0 0 30 30"><clipPath id="mc"><rect x="0.300" y="0.300" width="29.400" height="29.400" rx="6.800"/></clipPath><g clip-path="url(#mc)"><rect width="30" height="30" fill="#efe9d8"/><rect x="0" y="0" width="9" height="30" fill="#f6d666"/><path d="M14 0H30V16C22 18 15 10 14 0Z" fill="#6ac267"/><circle cx="26" cy="2" r="9" fill="none" stroke="#fff" stroke-width="3.200"/><path d="M0 22L30 17V30H0Z" fill="#f0c7a8"/><path d="M0 25L30 21" stroke="#f4a24a" stroke-width="2.600"/><path d="M17 30L30 16" stroke="#86c5ef" stroke-width="5"/><rect x="7.200" y="0" width="4" height="30" fill="#fff"/><circle cx="9.200" cy="18.500" r="4.400" fill="#2d7ef0" stroke="#fff" stroke-width="1.500"/><path d="M20 21h7l-0.800 5.500l-2.700 2l-2.700-2z" fill="#3a63c8" stroke="#fff" stroke-width="0.700"/><rect x="20.400" y="21" width="6.200" height="1.800" fill="#e0443c"/></g></svg>
<svg style="left:294.92px;top:569.60px;" width="27.4" height="27.4" viewBox="0 0 30 30"><rect x="0.300" y="0.300" width="29.400" height="29.400" rx="6.79" fill="#f6f6f7"/><ellipse cx="15" cy="8.600" rx="3.500" ry="6" fill="#f5a623" opacity="0.820" transform="rotate(0 15 15)"/><ellipse cx="15" cy="8.600" rx="3.500" ry="6" fill="#f8d33a" opacity="0.820" transform="rotate(45 15 15)"/><ellipse cx="15" cy="8.600" rx="3.500" ry="6" fill="#9bd14a" opacity="0.820" transform="rotate(90 15 15)"/><ellipse cx="15" cy="8.600" rx="3.500" ry="6" fill="#4fc7a8" opacity="0.820" transform="rotate(135 15 15)"/><ellipse cx="15" cy="8.600" rx="3.500" ry="6" fill="#4aa3f0" opacity="0.820" transform="rotate(180 15 15)"/><ellipse cx="15" cy="8.600" rx="3.500" ry="6" fill="#8f6be6" opacity="0.820" transform="rotate(225 15 15)"/><ellipse cx="15" cy="8.600" rx="3.500" ry="6" fill="#d85fc0" opacity="0.820" transform="rotate(270 15 15)"/><ellipse cx="15" cy="8.600" rx="3.500" ry="6" fill="#f0615a" opacity="0.820" transform="rotate(315 15 15)"/></svg>
<svg style="left:330.78px;top:569.60px;" width="27.4" height="27.4" viewBox="0 0 30 30"><rect x="0.300" y="0.300" width="29.400" height="29.400" rx="6.79" fill="url(#gMsg)"/><rect x="5" y="9.600" width="13.400" height="10.800" rx="2.800" fill="#f2fbf1"/><path d="M19.600 13.400L24.600 10.200V19.800L19.600 16.600Z" fill="#f2fbf1"/></svg>
<svg style="left:366.64px;top:569.60px;" width="27.4" height="27.4" viewBox="0 0 30 30"><clipPath id="cc"><rect x="0.300" y="0.300" width="29.400" height="29.400" rx="6.800"/></clipPath><g clip-path="url(#cc)"><rect width="30" height="30" fill="#fbfbfb"/><rect width="30" height="8.400" fill="#ee5a4f"/></g><text x="15" y="6.800" font-size="5.600" fill="#fff" text-anchor="middle" font-weight="bold" font-family="Liberation Sans, Noto Sans CJK SC, sans-serif">7月</text><text x="15" y="25" font-size="17.500" fill="#3a3a3a" text-anchor="middle" font-family="Liberation Sans, sans-serif">31</text></svg>
<svg style="left:402.50px;top:569.60px;" width="27.4" height="27.4" viewBox="0 0 30 30"><rect x="0.300" y="0.300" width="29.400" height="29.400" rx="6.79" fill="#fbfbfc"/><circle cx="6.800" cy="8.400" r="2" fill="#3a86f5"/><circle cx="6.800" cy="15" r="2" fill="#ee5046"/><circle cx="6.800" cy="21.600" r="2" fill="#f5a030"/><path d="M11 8.400H26M11 15H26M11 21.600H26" stroke="#d0d0d3" stroke-width="0.800"/></svg>
<svg style="left:438.36px;top:569.60px;" width="27.4" height="27.4" viewBox="0 0 30 30"><rect x="0.300" y="0.300" width="29.400" height="29.400" rx="6.79" fill="url(#gNotes)"/><path d="M1 14H29M1 19H29M1 24H29" stroke="#d5d2ca" stroke-width="0.600"/></svg>
<svg style="left:474.22px;top:569.60px;" width="27.4" height="27.4" viewBox="0 0 30 30"><rect x="0.300" y="0.300" width="29.400" height="29.400" rx="6.79" fill="#1c1c1e"/><path d="M8.800 12.200c0-1.200 1-1.800 1-1.800-0.600-0.800-1.400-0.900-1.700-0.900-0.700-0.100-1.400 0.400-1.800 0.400s-0.900-0.400-1.500-0.400c-0.800 0-1.500 0.500-1.900 1.200-0.800 1.400-0.200 3.500 0.600 4.600 0.400 0.600 0.900 1.200 1.500 1.200s0.800-0.400 1.500-0.400 0.900 0.400 1.500 0.400 1-0.600 1.400-1.100c0.400-0.600 0.600-1.300 0.600-1.300s-1.200-0.500-1.200-1.900zM7.700 8.800c0.300-0.400 0.500-0.900 0.500-1.400-0.500 0-1 0.300-1.300 0.700-0.300 0.300-0.500 0.900-0.500 1.400 0.500 0 1-0.300 1.300-0.700z" fill="#fff" transform="translate(2.200 3.400) scale(1.150)"/><text x="21" y="19.400" font-size="12" fill="#fff" text-anchor="middle" font-family="Liberation Sans, sans-serif">tv</text></svg>
<svg style="left:510.08px;top:569.60px;" width="27.4" height="27.4" viewBox="0 0 30 30"><rect x="0.300" y="0.300" width="29.400" height="29.400" rx="6.79" fill="url(#gMusic)"/><path d="M12 8.800L21.600 6.600V19.200a2.800 2.400 0 1 1-1.800-2.200V10.600L13.800 12V21a2.800 2.400 0 1 1-1.800-2.200Z" fill="#fff"/></svg>
<svg style="left:545.94px;top:569.60px;" width="27.4" height="27.4" viewBox="0 0 30 30"><rect x="0.300" y="0.300" width="29.400" height="29.400" rx="6.79" fill="url(#gPod)"/><circle cx="15" cy="12.600" r="2.400" fill="#fff"/><path d="M12.800 17.200c0-1 1-1.600 2.200-1.600s2.200 0.600 2.200 1.600l-0.800 6.400c-0.100 0.800-0.600 1.200-1.400 1.200s-1.300-0.400-1.400-1.200z" fill="#fff"/><path d="M10.400 18.400a6.200 6.200 0 1 1 9.200 0" fill="none" stroke="#fff" stroke-width="1.500" stroke-linecap="round"/><path d="M8.600 22a10 10 0 1 1 12.800 0" fill="none" stroke="#fff" stroke-width="1.500" stroke-linecap="round"/></svg>
<svg style="left:581.80px;top:569.60px;" width="27.4" height="27.4" viewBox="0 0 30 30"><rect x="0.300" y="0.300" width="29.400" height="29.400" rx="6.79" fill="url(#gStore)"/><g stroke="#fff" stroke-width="2.200" stroke-linecap="round" fill="none"><path d="M16.600 7L9.400 20.600M13.400 7L21.400 21.600M6.600 17.600H15.500M19.600 17.600H23.400M8.200 22.600L7.400 24"/></g></svg>
<svg style="left:617.66px;top:569.60px;" width="27.4" height="27.4" viewBox="0 0 30 30"><rect x="0.300" y="0.300" width="29.400" height="29.400" rx="6.79" fill="url(#gGear)"/><circle cx="15" cy="15" r="10.400" fill="#4a4a4d"/><circle cx="15" cy="15" r="8.800" fill="none" stroke="#2e2e30" stroke-width="2.400" stroke-dasharray="1.400 0.900"/><circle cx="15" cy="15" r="7.200" fill="#8e8e92"/><circle cx="15" cy="15" r="6" fill="#5a5a5e"/><path d="M15 15V9.200M15 15L20 17.900M15 15L10 17.900" stroke="#a5a5a9" stroke-width="1.400"/><circle cx="15" cy="15" r="1.800" fill="#b5b5b9"/></svg>
<div class="abs" style="left:636.5600000000001px;top:567.200px;width:9.600px;height:9.600px;border-radius:50%;background:#f0443e;color:#fff;font-size:6.200px;line-height:9.600px;text-align:center">2</div>
<svg style="left:653.52px;top:569.60px;" width="27.4" height="27.4" viewBox="0 0 30 30"><circle cx="15" cy="15" r="14.600" fill="#55a748"/><circle cx="15" cy="15" r="14.600" fill="none" stroke="#6cc05e" stroke-width="0.800"/><path d="M5.400 16.800L24.600 6.800L18.600 24.200L14.200 19.200L12.200 23L11.600 18Z" fill="#fff"/><path d="M11.600 18L24.600 6.800L14.200 19.200" fill="#dcefd8"/></svg>
<div class="abs" style="left:693.4px;top:570px;width:0.7px;height:27px;background:#bcbcbc;"></div>
<svg style="left:705.50px;top:569.60px;" width="27.4" height="27.4" viewBox="0 0 30 30"><rect x="0.300" y="0.300" width="29.400" height="29.400" rx="6.79" fill="#fff"/><circle cx="15" cy="10.400" r="4" fill="none" stroke="#ea3d4a" stroke-width="2.400"/><circle cx="9.400" cy="17" r="4.200" fill="none" stroke="#2f8bf5" stroke-width="2.400"/><circle cx="20.600" cy="17" r="4.200" fill="none" stroke="#2f8bf5" stroke-width="2.400"/><path d="M9.400 12.800C11 9 19 9 20.600 12.800" fill="none" stroke="#2f8bf5" stroke-width="2.400"/><rect x="10.400" y="27" width="5" height="1.800" fill="#ea3d4a"/><rect x="15.400" y="27" width="5" height="1.800" fill="#2f8bf5"/></svg>
<div class="abs" style="left:718.3000000000001px;top:602.200px;width:1.800px;height:1.800px;border-radius:50%;background:#444"></div>
<div class="abs" style="left:739.400px;top:567.200px;width:31px;height:31px;background:#2d1a04;border:1.300px solid #f1912a;box-sizing:border-box"></div>
<div class="t" style="left:746.6px;top:573.8px;font-size:18.2px;color:#f39a2e;letter-spacing:-0.300px">Ai</div>
<div class="abs" style="left:754.1px;top:602.200px;width:1.800px;height:1.800px;border-radius:50%;background:#444"></div>
<div class="abs" style="left:775.600px;top:567.200px;width:31px;height:31px;background:#0b1c34;border-radius:6px"></div>
<div class="t" style="left:780.8px;top:574px;font-size:18px;color:#3aa5f8;font-weight:bold;letter-spacing:-0.500px">Ps</div>
<div class="abs" style="left:790.1px;top:602.200px;width:1.800px;height:1.800px;border-radius:50%;background:#444"></div>
<svg style="left:812.90px;top:569.60px;" width="27.4" height="27.4" viewBox="0 0 30 30"><rect x="0.300" y="0.300" width="29.400" height="29.400" rx="6.79" fill="#f7f7f8"/><circle cx="15" cy="15" r="11.600" fill="#e8453c"/><path d="M15 15L4.960 9.200A11.600 11.600 0 0 0 9.200 25.050Z" fill="#34a353"/><path d="M15 15L9.200 25.050A11.600 11.600 0 0 0 25.050 9.200Z" fill="#f7c12f"/><path d="M15 15L9.200 25.050A11.600 11.600 0 0 1 4.960 9.200Z" fill="#34a353"/><path d="M15 15H26.600A11.600 11.600 0 0 0 4.960 9.200Z" fill="#e8453c"/><path d="M15 15H26.600A11.600 11.600 0 0 1 9.200 25.050Z" fill="#f7c12f"/><circle cx="15" cy="15" r="5.400" fill="#fff"/><circle cx="15" cy="15" r="4.300" fill="#4a86ee"/></svg>
<div class="abs" style="left:825.7px;top:602.200px;width:1.800px;height:1.800px;border-radius:50%;background:#444"></div>
<svg style="left:848.90px;top:569.60px;" width="27.4" height="27.4" viewBox="0 0 30 30"><rect x="0.300" y="0.300" width="29.400" height="29.400" rx="6.79" fill="#fdfdfd"/><path d="M4.200 8.400H9.600L12.200 17.400L15 9.400L17.800 17.400L20.400 8.400H25.800L20.600 22.600H15.800L15 20L14.200 22.600H9.400Z" fill="#e8352a"/><path d="M9.600 8.400H20.400L18.600 13L15 9.400L11.400 13Z" fill="#f2632a"/></svg>
<div class="abs" style="left:861.7px;top:602.200px;width:1.800px;height:1.800px;border-radius:50%;background:#444"></div>
<svg style="left:884.70px;top:569.60px;" width="27.4" height="27.4" viewBox="0 0 30 30"><rect x="0.300" y="0.300" width="29.400" height="29.400" rx="6.79" fill="#63cf6e"/><ellipse cx="12" cy="12.600" rx="7.200" ry="6" fill="#f2fbf1"/><path d="M7.200 17l-1 3l3.400-1.800z" fill="#f2fbf1"/><ellipse cx="19.400" cy="18.200" rx="6" ry="5" fill="#f2fbf1" stroke="#5fd06a" stroke-width="0.900"/><path d="M22.600 22.400l1 2.400l-3-1.400z" fill="#f2fbf1"/><circle cx="9.600" cy="11" r="0.900" fill="#55c760"/><circle cx="14.400" cy="11" r="0.900" fill="#55c760"/><circle cx="17.400" cy="17" r="0.800" fill="#55c760"/><circle cx="21.400" cy="17" r="0.800" fill="#55c760"/></svg>
<div class="abs" style="left:897.5px;top:602.200px;width:1.800px;height:1.800px;border-radius:50%;background:#444"></div>
<div class="abs" style="left:925px;top:570px;width:0.7px;height:27px;background:#bcbcbc;"></div>
<div class="t" style="left:941px;top:565.6px;font-size:38px;color:#f1f1f1;font-weight:normal;-webkit-text-stroke:0.700px #bdbdbd;transform:scaleX(0.880);transform-origin:left">?</div>
<div class="abs" style="left:970.8px;top:575.2px;width:31.2px;height:16.6px;background:#fbfbfb;border:0.400px solid #dcdcdc;box-shadow:0 0.500px 1.500px rgba(0,0,0,0.250)"></div>
<div class="abs" style="left:970.8px;top:575.2px;width:31.2px;height:2.4px;background:#e8e8e8;"></div>
<div class="abs" style="left:973px;top:576px;width:5px;height:0.8px;background:#e0564c;"></div>
<div class="abs" style="left:984px;top:585px;width:6px;height:0.6px;background:#c9c9c9;"></div>
<div class="abs" style="left:985px;top:587px;width:4px;height:0.6px;background:#d5d5d5;"></div>
<div class="abs" style="left:992.4px;top:589.4px;width:8.6px;height:8.6px;background:#fff;border-radius:1.600px;box-shadow:0 0.300px 1px rgba(0,0,0,0.300)"></div>
<svg style="left:993.200px;top:591px" width="7" height="5.400" viewBox="4 8 22 15"><path d="M4.200 8.400H9.600L12.200 17.400L15 9.400L17.800 17.400L20.400 8.400H25.800L20.600 22.600H15.800L15 20L14.200 22.600H9.400Z" fill="#e8352a"/></svg>
<svg style="left:1010.800px;top:567.800px" width="24" height="31" viewBox="0 0 24 31"><defs><linearGradient id="gTr" x1="0" x2="1"><stop offset="0" stop-color="#cdcdd0"/><stop offset="0.350" stop-color="#e9e9eb"/><stop offset="0.700" stop-color="#dcdcde"/><stop offset="1" stop-color="#c6c6c9"/></linearGradient></defs><path d="M1.600 4.500H22.400L20 28.500Q19.800 30.400 17.800 30.400H6.200Q4.200 30.400 4 28.500Z" fill="url(#gTr)" stroke="#c2c2c5" stroke-width="0.500"/><ellipse cx="12" cy="4.600" rx="10.500" ry="2.600" fill="#bdbdc0"/><g><circle cx="7" cy="3.600" r="1.400" fill="#8b5a3a"/><circle cx="10" cy="2.800" r="1.300" fill="#3f6fb5"/><circle cx="13" cy="3.400" r="1.500" fill="#d9d9d9"/><circle cx="16" cy="3" r="1.300" fill="#c94f4f"/><circle cx="18.200" cy="4" r="1.200" fill="#5a8f4a"/><circle cx="8.600" cy="5" r="1.200" fill="#e8c24a"/><circle cx="14.600" cy="5" r="1.200" fill="#444"/></g></svg>
</div>
</body>
</html>
